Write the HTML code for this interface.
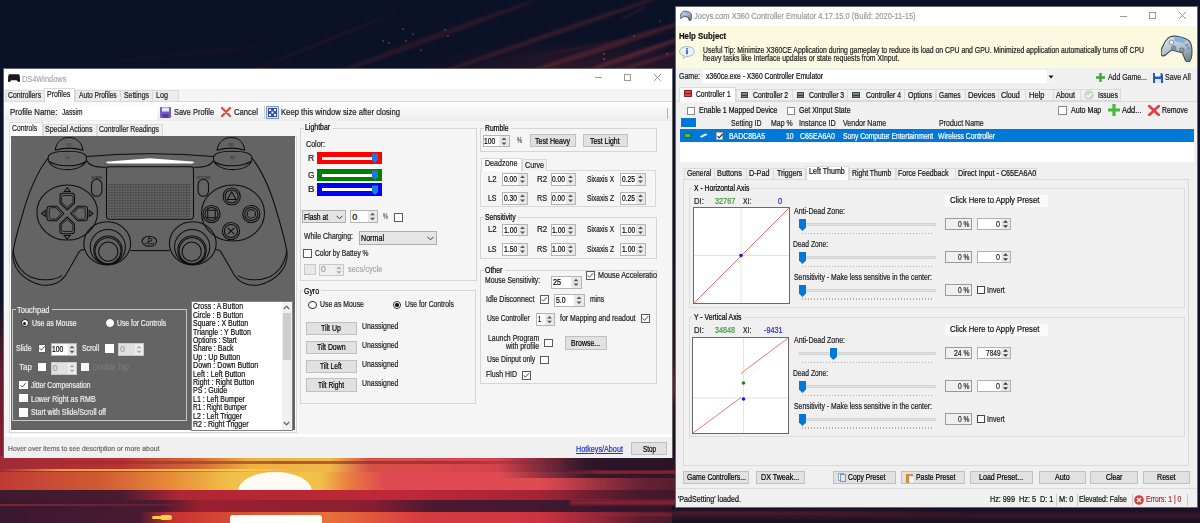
<!DOCTYPE html><html><head><meta charset="utf-8"><style>html,body{margin:0;padding:0;width:1200px;height:523px;overflow:hidden;position:relative;}body *{position:absolute;box-sizing:border-box;}span{white-space:nowrap;font-family:"Liberation Sans",sans-serif;-webkit-text-stroke:0.22px;}svg *{position:static}</style></head><body><div style="left:0;top:0;width:1200px;height:523px;background:#0b1127"></div>
<div style="left:0;top:0;width:680px;height:70px;overflow:hidden"><div style="left:380px;top:10px;width:320px;height:70px;background:radial-gradient(ellipse 60% 55% at 70% 95%,rgba(90,30,45,.55),rgba(60,20,40,0))"></div><div style="left:330px;top:72px;width:220px;height:6px;background:#4a1e2e;opacity:0.45;transform:rotate(-20deg);transform-origin:0 50%;filter:blur(1.2px);border-radius:50%"></div><div style="left:440px;top:70px;width:240px;height:5px;background:#5a2230;opacity:0.5;transform:rotate(-19deg);transform-origin:0 50%;filter:blur(1.2px);border-radius:50%"></div><div style="left:520px;top:72px;width:180px;height:6px;background:#6a2832;opacity:0.55;transform:rotate(-18deg);transform-origin:0 50%;filter:blur(1.2px);border-radius:50%"></div><div style="left:585px;top:69px;width:120px;height:5px;background:#7a2e36;opacity:0.55;transform:rotate(-19deg);transform-origin:0 50%;filter:blur(1.2px);border-radius:50%"></div><div style="left:600px;top:74px;width:100px;height:4px;background:#6a2832;opacity:0.5;transform:rotate(-17deg);transform-origin:0 50%;filter:blur(1.2px);border-radius:50%"></div><div style="left:250px;top:70px;width:160px;height:3px;background:#3a1a2a;opacity:0.45;transform:rotate(-22deg);transform-origin:0 50%;filter:blur(1.2px);border-radius:50%"></div><div style="left:515px;top:58px;width:170px;height:3px;background:#3e1a2a;opacity:0.5;transform:rotate(-10deg);transform-origin:0 50%;filter:blur(1.2px);border-radius:50%"></div><div style="left:620px;top:19px;width:30px;height:1.5px;background:#4a2030;opacity:0.6;transform:rotate(-28deg);transform-origin:0 50%;filter:blur(1.2px);border-radius:50%"></div><div style="left:100px;top:62px;width:180px;height:2px;background:#2e1628;opacity:0.5;transform:rotate(-6deg);transform-origin:0 50%;filter:blur(1.2px);border-radius:50%"></div><div style="left:402px;top:28px;width:2px;height:2px;background:#a04a3a;opacity:.65;border-radius:1px"></div><div style="left:412px;top:33px;width:2px;height:2px;background:#a04a3a;opacity:.65;border-radius:1px"></div><div style="left:405px;top:40px;width:2px;height:2px;background:#a04a3a;opacity:.65;border-radius:1px"></div><div style="left:444px;top:29px;width:2px;height:2px;background:#a04a3a;opacity:.65;border-radius:1px"></div><div style="left:447px;top:35px;width:2px;height:2px;background:#a04a3a;opacity:.65;border-radius:1px"></div><div style="left:420px;top:49px;width:2px;height:2px;background:#904a3a;opacity:.65;border-radius:1px"></div><div style="left:382px;top:40px;width:2px;height:2px;background:#904a3a;opacity:.65;border-radius:1px"></div><div style="left:388px;top:42px;width:2px;height:2px;background:#904a3a;opacity:.65;border-radius:1px"></div><div style="left:603px;top:53px;width:2px;height:2px;background:#c05050;opacity:.65;border-radius:1px"></div><div style="left:603px;top:58px;width:2px;height:2px;background:#c05050;opacity:.65;border-radius:1px"></div><div style="left:666px;top:53px;width:2px;height:2px;background:#b05a3a;opacity:.65;border-radius:1px"></div><div style="left:633px;top:35px;width:2px;height:2px;background:#904040;opacity:.65;border-radius:1px"></div><div style="left:659px;top:20px;width:2px;height:2px;background:#804040;opacity:.65;border-radius:1px"></div></div>
<div style="left:671px;top:200px;width:6px;height:260px;background:linear-gradient(180deg,#0c1125,#2a1226 60%,#6a2030 72%,#2a1226 80%,#141020)"></div>
<div style="left:0;top:300px;width:4px;height:160px;background:linear-gradient(180deg,#0c1125,#5a1a2c 40%,#8a2030)"></div>
<div style="left:0;top:456px;width:676px;height:16px;background:linear-gradient(90deg,#a02a36 0px,#b83234 120px,#d86a34 200px,#f0b040 250px,#f0b848 330px,#d85048 370px,#d8444e 480px,#b8384a 560px,#3e1a30 610px,#2e1628 676px);"></div>
<div style="left:0;top:461px;width:676px;height:3px;background:linear-gradient(90deg,rgba(80,20,40,.0) 0px,rgba(120,30,40,.6) 280px,rgba(120,30,40,.5) 460px,rgba(60,20,40,0) 560px);"></div>
<div style="left:0;top:472px;width:676px;height:18px;background:linear-gradient(90deg,#c03a34 0px,#d05a34 100px,#e88a38 170px,#f0c048 230px,#f0c048 320px,#e87a40 350px,#e04a52 385px,#e04a52 560px,#c83a48 620px,#8a2a3a 676px);"></div>
<div style="left:0;top:469px;width:676px;height:2px;background:linear-gradient(90deg,rgba(240,180,60,0) 0px,#e8a040 60px,#f8d050 240px,rgba(248,208,80,0) 300px);"></div>
<div style="left:237.5px;top:471.5px;width:74px;height:19px;border-radius:37px 37px 0 0/19px 19px 0 0;background:#fffaf4"></div>
<div style="left:0;top:490px;width:676px;height:10px;background:linear-gradient(90deg,#3e1a30 0px,#4a1a30 120px,#b02634 180px,#c02838 400px,#a02434 560px,#5a1c30 676px);"></div>
<div style="left:0;top:500px;width:676px;height:12px;background:linear-gradient(90deg,#3a1830 0px,#4a1a30 160px,#9a2030 200px,#8a1e30 370px,#4a1a30 430px,#3a1830 676px);"></div>
<div style="left:0;top:504px;width:676px;height:2px;background:linear-gradient(90deg,rgba(160,40,55,.7) 0px,rgba(160,40,55,.3) 170px,rgba(160,40,55,0) 176px);"></div>
<div style="left:0;top:512px;width:676px;height:11px;background:linear-gradient(90deg,#3a1830 0px,#4a1a30 140px,#c83030 170px,#d84a34 230px,#e87038 330px,#d83a40 420px,#c83040 600px,#6a2030 676px);"></div>
<div style="left:500px;top:456px;width:176px;height:22px;background:#2a1428;-webkit-mask-image:linear-gradient(90deg,transparent,rgba(0,0,0,.92) 90px)"></div>
<div style="left:540px;top:478px;width:136px;height:45px;background:#2a1428;-webkit-mask-image:linear-gradient(90deg,transparent,rgba(0,0,0,.55) 100px)"></div>
<div style="left:560px;top:470px;width:116px;height:4px;background:rgba(200,50,60,.55);filter:blur(1px);-webkit-mask-image:linear-gradient(90deg,transparent,#000 40px)"></div>
<div style="left:570px;top:500px;width:106px;height:5px;background:rgba(190,40,55,.6);filter:blur(1px)"></div>
<div style="left:600px;top:513px;width:76px;height:3px;background:rgba(170,40,55,.5);filter:blur(1px)"></div>
<div style="left:230px;top:515px;width:92px;height:8px;background:#fffdf8;border-radius:3px 3px 0 0"></div>
<div style="left:152px;top:516px;width:9px;height:3px;background:#f0d040;border-radius:2px"></div>
<div style="left:160px;top:515px;width:12px;height:5px;background:#f8d848;border-radius:3px"></div>
<div style="left:672px;top:506px;width:528px;height:17px;background:linear-gradient(180deg,#120f22 0,#1e1226 5px,#3a1628 9px,#241224 13px,#140f20 17px)"></div>
<div style="left:672px;top:511px;width:300px;height:4px;background:linear-gradient(90deg,#4a1a2a,rgba(90,30,45,.6) 50%,rgba(60,20,40,0));filter:blur(1px)"></div>
<div style="left:3px;top:68px;width:670px;height:390px;background:#f5f5f5;border:1px solid rgba(40,40,40,.7);border-bottom:none;"></div>
<div style="left:4px;top:69px;width:668px;height:20px;background:#fff"></div>
<svg style="left:8px;top:73px" width="12" height="10" viewBox="0 0 12 10"><path d="M2 1.2h8c1 0 1.5 .6 1.8 1.6l.2 5.2c0 1-.8 1.4-1.6.9L8.6 7.2H3.4L1.6 8.9C.8 9.4 0 9 0 8l.2-5.2C.5 1.8 1 1.2 2 1.2z" fill="#1a1a1a"/></svg>
<span style="left:22.41px;top:74.40px;font-size:9.52px;line-height:9.52px;color:#a8a8a8;transform:scaleX(0.776);transform-origin:0 0;">DS4Windows</span>
<div style="left:595px;top:77.3px;width:6.5px;height:1px;background:#999"></div>
<div style="left:624px;top:74.2px;width:7px;height:6.8px;border:1px solid #999"></div>
<svg style="left:653.6px;top:74.3px" width="7" height="7"><path d="M0 0L7 7M7 0L0 7" stroke="#8a8a8a" stroke-width="0.9"/></svg>
<div style="left:4px;top:101px;width:668px;height:1px;background:#d9d9d9"></div>
<div style="left:5px;top:89.5px;width:40px;height:12px;background:#ececec;border:1px solid #d9d9d9;"></div>
<div style="left:44px;top:88px;width:31px;height:14px;background:#fff;border:1px solid #d9d9d9;border-bottom:none;"></div>
<div style="left:75px;top:89.5px;width:46px;height:12px;background:#ececec;border:1px solid #d9d9d9;"></div>
<div style="left:120px;top:89.5px;width:33px;height:12px;background:#ececec;border:1px solid #d9d9d9;"></div>
<div style="left:152px;top:89.5px;width:27px;height:12px;background:#ececec;border:1px solid #d9d9d9;"></div>
<span style="left:7.66px;top:91.47px;font-size:8.96px;line-height:8.96px;color:#222;transform:scaleX(0.764);transform-origin:0 0;">Controllers</span>
<span style="left:47.44px;top:90.27px;font-size:8.96px;line-height:8.96px;color:#222;transform:scaleX(0.780);transform-origin:0 0;">Profiles</span>
<span style="left:78.50px;top:91.47px;font-size:8.96px;line-height:8.96px;color:#222;transform:scaleX(0.742);transform-origin:0 0;">Auto Profiles</span>
<span style="left:123.72px;top:91.47px;font-size:8.96px;line-height:8.96px;color:#222;transform:scaleX(0.772);transform-origin:0 0;">Settings</span>
<span style="left:156.42px;top:91.47px;font-size:8.96px;line-height:8.96px;color:#222;transform:scaleX(0.802);transform-origin:0 0;">Log</span>
<div style="left:5px;top:102px;width:667px;height:19px;background:linear-gradient(180deg,#fdfdfd,#f4f4f4 60%,#ececec)"></div>
<div style="left:667px;top:108px;width:1px;height:11px;background:#b0b0b0"></div>
<span style="left:9.58px;top:108.09px;font-size:9.30px;line-height:9.30px;color:#222;transform:scaleX(0.840);transform-origin:0 0;">Profile Name:</span>
<div style="left:59.5px;top:105.5px;width:97px;height:14.5px;background:#fff"></div>
<span style="left:62.43px;top:108.09px;font-size:9.30px;line-height:9.30px;color:#222;transform:scaleX(0.708);transform-origin:0 0;">Jassim</span>
<svg style="left:160px;top:106.5px" width="11" height="11" viewBox="0 0 11 11"><rect x="0" y="0" width="11" height="11" rx="1" fill="#7a5cc0"/><rect x="2" y="0.5" width="7" height="4" fill="#e8e4f4"/><rect x="2.5" y="7" width="6" height="4" fill="#5a3a9a"/></svg>
<span style="left:174.20px;top:108.09px;font-size:9.30px;line-height:9.30px;color:#222;transform:scaleX(0.799);transform-origin:0 0;">Save Profile</span>
<svg style="left:220.5px;top:106.5px" width="10" height="10" viewBox="0 0 10 10"><path d="M1 1L9 9M9 1L1 9" stroke="#e0503a" stroke-width="2.4" stroke-linecap="round"/></svg>
<span style="left:233.62px;top:108.09px;font-size:9.30px;line-height:9.30px;color:#222;transform:scaleX(0.825);transform-origin:0 0;">Cancel</span>
<div style="left:264px;top:106px;width:1px;height:13px;background:#d0d0d0"></div>
<svg style="left:266px;top:106px" width="13" height="13" viewBox="0 0 13 13"><rect x="0.5" y="0.5" width="12" height="12" fill="#dbe6f7" stroke="#7a9ac8"/><rect x="2" y="2" width="9" height="9" fill="#2f4fb0"/><rect x="3" y="3" width="2" height="2" fill="#fff"/><rect x="8" y="3" width="2" height="2" fill="#fff"/><rect x="3" y="8" width="2" height="2" fill="#fff"/><rect x="8" y="8" width="2" height="2" fill="#fff"/><rect x="5.5" y="5.5" width="2" height="2" fill="#fff"/></svg>
<span style="left:281.39px;top:108.09px;font-size:9.30px;line-height:9.30px;color:#222;transform:scaleX(0.826);transform-origin:0 0;">Keep this window size after closing</span>
<div style="left:5px;top:121px;width:667px;height:320px;background:#f5f5f5"></div>
<div style="left:8.5px;top:121.5px;width:34px;height:14.5px;background:#fff;border:1px solid #d9d9d9;border-bottom:none;"></div>
<div style="left:42.5px;top:123.5px;width:54px;height:12px;background:#f0f0f0;border:1px solid #d9d9d9;border-bottom:none;"></div>
<div style="left:96.5px;top:123.5px;width:66px;height:12px;background:#f0f0f0;border:1px solid #d9d9d9;border-bottom:none;"></div>
<span style="left:12.46px;top:123.67px;font-size:8.96px;line-height:8.96px;color:#222;transform:scaleX(0.757);transform-origin:0 0;">Controls</span>
<span style="left:45.22px;top:124.87px;font-size:8.96px;line-height:8.96px;color:#222;transform:scaleX(0.782);transform-origin:0 0;">Special Actions</span>
<span style="left:99.16px;top:124.87px;font-size:8.96px;line-height:8.96px;color:#222;transform:scaleX(0.758);transform-origin:0 0;">Controller Readings</span>
<div style="left:8.5px;top:135.5px;width:288px;height:297px;background:#fff;border:1px solid #d9d9d9;"></div>
<div style="left:10.5px;top:136px;width:284px;height:294px;background:#646464"></div>
<svg style="left:10.5px;top:136px" width="284" height="294" viewBox="10.5 136 284 294"><g>
<path d="M54.6 150.3 C56 142 61.5 137.5 68.5 137.5 C75.5 137.5 81 142 82.6 150.3" fill="none" stroke="#0d0d0d" stroke-width="1.05"/>
<path d="M54.6 150.3 Q68.5 146 82.6 150.3" fill="none" stroke="#0d0d0d" stroke-width="1.05"/>
<path d="M47.6 157.5 C48.5 152.8 57 151.3 67 151.3 C77 151.3 85.5 152.8 86 157.5 C86.6 164.5 78 169.6 67 169.6 C56 169.6 47 165 47.6 157.5 Z" fill="none" stroke="#0d0d0d" stroke-width="1.05"/>
<path d="M49 161.5 C55 165.5 62 165.8 67 165.8 C72 165.8 80 165.5 85.5 161.5" fill="none" stroke="#0d0d0d" stroke-width="1.05"/>
<path d="M47.6 158 C38 170 28 192 21 218 C15 238 11.5 252 12.6 258 C14 270 24 281 40 284.8 C52 287 62 282 67 272 L78.8 251.5 C80 250 82 249.5 84 249.5" fill="none" stroke="#0d0d0d" stroke-width="1.05"/>
<path d="M12.6 250 C14 262 20 272 30 277 C40 281 53 281 61.6 275.6" fill="none" stroke="#0d0d0d" stroke-width="1.05"/>
<path d="M86 156.6 Q118 153.6 149.5 153.8" fill="none" stroke="#0d0d0d" stroke-width="1.05"/>
<path d="M86 160.5 C88.5 165.5 94 167.3 106 167.3" fill="none" stroke="#0d0d0d" stroke-width="1.05"/>
<rect x="91" y="179.3" width="10.4" height="17" rx="5.2" fill="none" stroke="#0d0d0d" stroke-width="1.05"/>
<ellipse cx="106.7" cy="243.3" rx="23.4" ry="21.6" fill="none" stroke="#0d0d0d" stroke-width="1.05"/>
<circle cx="107.3" cy="247" r="17.6" fill="none" stroke="#0d0d0d" stroke-width="1.05"/>
<circle cx="107.5" cy="250.2" r="14.2" fill="none" stroke="#0d0d0d" stroke-width="1.05"/>
<circle cx="107.5" cy="250.8" r="13" fill="none" stroke="#0d0d0d" stroke-width="1.05"/>
<circle cx="107.8" cy="251.6" r="9.6" fill="none" stroke="#0d0d0d" stroke-width="1.05"/>
<path d="M130 250.6 L149.5 250.6" fill="none" stroke="#0d0d0d" stroke-width="1.05"/>
</g><g transform="translate(299,0) scale(-1,1)">
<path d="M54.6 150.3 C56 142 61.5 137.5 68.5 137.5 C75.5 137.5 81 142 82.6 150.3" fill="none" stroke="#0d0d0d" stroke-width="1.05"/>
<path d="M54.6 150.3 Q68.5 146 82.6 150.3" fill="none" stroke="#0d0d0d" stroke-width="1.05"/>
<path d="M47.6 157.5 C48.5 152.8 57 151.3 67 151.3 C77 151.3 85.5 152.8 86 157.5 C86.6 164.5 78 169.6 67 169.6 C56 169.6 47 165 47.6 157.5 Z" fill="none" stroke="#0d0d0d" stroke-width="1.05"/>
<path d="M49 161.5 C55 165.5 62 165.8 67 165.8 C72 165.8 80 165.5 85.5 161.5" fill="none" stroke="#0d0d0d" stroke-width="1.05"/>
<path d="M47.6 158 C38 170 28 192 21 218 C15 238 11.5 252 12.6 258 C14 270 24 281 40 284.8 C52 287 62 282 67 272 L78.8 251.5 C80 250 82 249.5 84 249.5" fill="none" stroke="#0d0d0d" stroke-width="1.05"/>
<path d="M12.6 250 C14 262 20 272 30 277 C40 281 53 281 61.6 275.6" fill="none" stroke="#0d0d0d" stroke-width="1.05"/>
<path d="M86 156.6 Q118 153.6 149.5 153.8" fill="none" stroke="#0d0d0d" stroke-width="1.05"/>
<path d="M86 160.5 C88.5 165.5 94 167.3 106 167.3" fill="none" stroke="#0d0d0d" stroke-width="1.05"/>
<rect x="91" y="179.3" width="10.4" height="17" rx="5.2" fill="none" stroke="#0d0d0d" stroke-width="1.05"/>
<ellipse cx="106.7" cy="243.3" rx="23.4" ry="21.6" fill="none" stroke="#0d0d0d" stroke-width="1.05"/>
<circle cx="107.3" cy="247" r="17.6" fill="none" stroke="#0d0d0d" stroke-width="1.05"/>
<circle cx="107.5" cy="250.2" r="14.2" fill="none" stroke="#0d0d0d" stroke-width="1.05"/>
<circle cx="107.5" cy="250.8" r="13" fill="none" stroke="#0d0d0d" stroke-width="1.05"/>
<circle cx="107.8" cy="251.6" r="9.6" fill="none" stroke="#0d0d0d" stroke-width="1.05"/>
<path d="M130 250.6 L149.5 250.6" fill="none" stroke="#0d0d0d" stroke-width="1.05"/>
</g><path d="M105.5 162.3 Q106 161.6 108 161.4 L149.5 158.2 L191 161.4 Q193.5 161.6 193.8 162.3 Q193.5 163.3 191 163.4 L108 163.4 Q106 163.3 105.5 162.3Z" fill="#fff"/><path d="M106 170 Q106 166.7 109 166.7 L190 166.7 Q193 166.7 193 170 L193 216 Q193 219.2 189.8 219.2 L109.2 219.2 Q106 219.2 106 216 Z" fill="none" stroke="#0d0d0d" stroke-width="1.05"/><defs><pattern id="dp" width="1.6" height="1.6" patternUnits="userSpaceOnUse"><rect width="0.8" height="0.8" fill="#1a1a1a"/></pattern></defs><rect x="108" y="183.7" width="82.6" height="33.6" fill="url(#dp)" opacity="0.65"/><ellipse cx="66.7" cy="212.5" rx="30.3" ry="27.6" fill="none" stroke="#0d0d0d" stroke-width="1.05"/><ellipse cx="232.5" cy="213" rx="31.5" ry="28" fill="none" stroke="#0d0d0d" stroke-width="1.05"/><g transform="rotate(0 66.7 213.5)"><path d="M59.5 196 Q59.5 193.5 62 193.2 L71.5 193.2 Q74 193.5 74 196 L74 203 L66.7 210 L59.5 203 Z" fill="none" stroke="#0d0d0d" stroke-width="1.05"/><path d="M61 197.5 Q61 195.6 63 195.5 L70.5 195.5 Q72.5 195.6 72.5 197.5 L72.5 202.3 L66.7 207.5 L61 202.3 Z" fill="none" stroke="#0d0d0d" stroke-width="0.8"/><path d="M63.8 191.5 L66.7 187.8 L69.6 191.5 Z" fill="none" stroke="#0d0d0d" stroke-width="1.05"/></g><g transform="rotate(90 66.7 213.5)"><path d="M59.5 196 Q59.5 193.5 62 193.2 L71.5 193.2 Q74 193.5 74 196 L74 203 L66.7 210 L59.5 203 Z" fill="none" stroke="#0d0d0d" stroke-width="1.05"/><path d="M61 197.5 Q61 195.6 63 195.5 L70.5 195.5 Q72.5 195.6 72.5 197.5 L72.5 202.3 L66.7 207.5 L61 202.3 Z" fill="none" stroke="#0d0d0d" stroke-width="0.8"/><path d="M63.8 191.5 L66.7 187.8 L69.6 191.5 Z" fill="none" stroke="#0d0d0d" stroke-width="1.05"/></g><g transform="rotate(180 66.7 213.5)"><path d="M59.5 196 Q59.5 193.5 62 193.2 L71.5 193.2 Q74 193.5 74 196 L74 203 L66.7 210 L59.5 203 Z" fill="none" stroke="#0d0d0d" stroke-width="1.05"/><path d="M61 197.5 Q61 195.6 63 195.5 L70.5 195.5 Q72.5 195.6 72.5 197.5 L72.5 202.3 L66.7 207.5 L61 202.3 Z" fill="none" stroke="#0d0d0d" stroke-width="0.8"/><path d="M63.8 191.5 L66.7 187.8 L69.6 191.5 Z" fill="none" stroke="#0d0d0d" stroke-width="1.05"/></g><g transform="rotate(270 66.7 213.5)"><path d="M59.5 196 Q59.5 193.5 62 193.2 L71.5 193.2 Q74 193.5 74 196 L74 203 L66.7 210 L59.5 203 Z" fill="none" stroke="#0d0d0d" stroke-width="1.05"/><path d="M61 197.5 Q61 195.6 63 195.5 L70.5 195.5 Q72.5 195.6 72.5 197.5 L72.5 202.3 L66.7 207.5 L61 202.3 Z" fill="none" stroke="#0d0d0d" stroke-width="0.8"/><path d="M63.8 191.5 L66.7 187.8 L69.6 191.5 Z" fill="none" stroke="#0d0d0d" stroke-width="1.05"/></g><circle cx="231.2" cy="196.5" r="8.6" fill="none" stroke="#0d0d0d" stroke-width="1.05"/><circle cx="231.2" cy="196.5" r="6.6" fill="none" stroke="#0d0d0d" stroke-width="1.05"/><circle cx="211" cy="214" r="8.6" fill="none" stroke="#0d0d0d" stroke-width="1.05"/><circle cx="211" cy="214" r="6.6" fill="none" stroke="#0d0d0d" stroke-width="1.05"/><circle cx="250.8" cy="214" r="8.6" fill="none" stroke="#0d0d0d" stroke-width="1.05"/><circle cx="250.8" cy="214" r="6.6" fill="none" stroke="#0d0d0d" stroke-width="1.05"/><circle cx="230.5" cy="231" r="8.6" fill="none" stroke="#0d0d0d" stroke-width="1.05"/><circle cx="230.5" cy="231" r="6.6" fill="none" stroke="#0d0d0d" stroke-width="1.05"/><path d="M231.2 191.8 L235.6 199.5 L226.8 199.5 Z" fill="none" stroke="#0d0d0d" stroke-width="1.05"/><rect x="207.2" y="210.2" width="7.6" height="7.6" fill="none" stroke="#0d0d0d" stroke-width="1.05"/><circle cx="250.8" cy="214" r="4.2" fill="none" stroke="#0d0d0d" stroke-width="1.05"/><path d="M227.3 227.8 L233.7 234.2 M233.7 227.8 L227.3 234.2" fill="none" stroke="#0d0d0d" stroke-width="1.05"/><ellipse cx="148.8" cy="241.3" rx="7.3" ry="5" fill="none" stroke="#0d0d0d" stroke-width="1.05"/><path d="M148.2 237.6 L148.2 244.6 M148.2 238 Q151.4 237.8 151.4 239.8 Q151.4 241.6 148.4 241.4 M144.2 243.6 Q146.4 242.4 147.6 243.2 M149.2 243.8 Q151.6 243.9 153.4 243" fill="none" stroke="#0d0d0d" stroke-width="0.9"/><text x="68.5" y="145.5" font-size="3.6" text-anchor="middle" fill="#1a1a1a" font-family="Liberation Sans">L2</text><text x="67" y="158.8" font-size="3.6" text-anchor="middle" fill="#1a1a1a" font-family="Liberation Sans">L1</text><text x="230.5" y="145.5" font-size="3.6" text-anchor="middle" fill="#1a1a1a" font-family="Liberation Sans">R2</text><text x="232" y="158.8" font-size="3.6" text-anchor="middle" fill="#1a1a1a" font-family="Liberation Sans">R1</text><text x="96.2" y="178.5" font-size="3.2" text-anchor="middle" fill="#1a1a1a" font-family="Liberation Sans">SHARE</text><text x="202.8" y="178.5" font-size="3.2" text-anchor="middle" fill="#1a1a1a" font-family="Liberation Sans">OPTIONS</text></svg>
<div style="left:12px;top:309px;width:175px;height:112px;border:1px solid #c8c8c8;"></div>
<div style="left:15.5px;top:305px;width:36px;height:8px;background:#646464;"></div>
<span style="left:17.35px;top:305.87px;font-size:8.96px;line-height:8.96px;color:#ececec;transform:scaleX(0.838);transform-origin:0 0;">Touchpad</span>
<div style="left:20.8px;top:319px;width:8px;height:8px;background:#fff;border:1px solid #222;border-radius:50%;"></div>
<div style="left:23.3px;top:321.5px;width:3px;height:3px;background:#111;border-radius:50%;"></div>
<span style="left:32.21px;top:319.37px;font-size:8.96px;line-height:8.96px;color:#ececec;transform:scaleX(0.781);transform-origin:0 0;">Use as Mouse</span>
<div style="left:105.7px;top:319px;width:8px;height:8px;background:#fff;border:1px solid #fff;border-radius:50%;"></div>
<span style="left:116.82px;top:319.37px;font-size:8.96px;line-height:8.96px;color:#ececec;transform:scaleX(0.760);transform-origin:0 0;">Use for Controls</span>
<span style="left:16.42px;top:344.37px;font-size:8.96px;line-height:8.96px;color:#ececec;transform:scaleX(0.779);transform-origin:0 0;">Slide</span>
<div style="left:37.7px;top:344px;width:8.5px;height:8.5px;background:#fff;border:1px solid #5a5a5a;"></div>
<svg style="left:37.7px;top:344px" width="8.5" height="8.5" viewBox="0 0 9 9"><path d="M1.8 4.6L3.6 6.5L7.3 2.3" fill="none" stroke="#3a3a3a" stroke-width="0.95"/></svg>
<div style="left:50.8px;top:342.7px;width:26px;height:13px;background:#fff;border:1px solid #b4b4b4;"></div>
<div style="left:67.8px;top:343.7px;width:8px;height:11px;background:#e8e8e8;"></div>
<svg style="left:67.8px;top:343.7px" width="8" height="11"><path d="M1.5 4.3L4.0 1.7999999999999998L6.5 4.3Z M1.5 6.7L4.0 9.2L6.5 6.7Z" fill="#555"/></svg>
<span style="left:52.33px;top:344.95px;font-size:8.96px;line-height:8.96px;color:#000;transform:scaleX(0.751);transform-origin:0 0;">100</span>
<span style="left:82.42px;top:344.37px;font-size:8.96px;line-height:8.96px;color:#ececec;transform:scaleX(0.767);transform-origin:0 0;">Scroll</span>
<div style="left:105px;top:344px;width:8.5px;height:8.5px;background:#fff;border:1px solid #fff;"></div>
<div style="left:118.2px;top:342.7px;width:25.5px;height:13px;background:#e0e0e0;border:1px solid #c8c8c8;"></div>
<div style="left:134.7px;top:343.7px;width:8px;height:11px;background:#ececec;"></div>
<svg style="left:134.7px;top:343.7px" width="8" height="11"><path d="M1.5 4.3L4.0 1.7999999999999998L6.5 4.3Z M1.5 6.7L4.0 9.2L6.5 6.7Z" fill="#aaa"/></svg>
<span style="left:119.93px;top:344.95px;font-size:8.96px;line-height:8.96px;color:#a0a0a0;">0</span>
<span style="left:19.24px;top:362.87px;font-size:8.96px;line-height:8.96px;color:#ececec;transform:scaleX(0.887);transform-origin:0 0;">Tap</span>
<div style="left:37.7px;top:362.7px;width:8.5px;height:8.5px;background:#fff;border:1px solid #fff;"></div>
<div style="left:50.8px;top:361.6px;width:26px;height:13px;background:#e0e0e0;border:1px solid #c8c8c8;"></div>
<div style="left:67.8px;top:362.6px;width:8px;height:11px;background:#ececec;"></div>
<svg style="left:67.8px;top:362.6px" width="8" height="11"><path d="M1.5 4.3L4.0 1.7999999999999998L6.5 4.3Z M1.5 6.7L4.0 9.2L6.5 6.7Z" fill="#aaa"/></svg>
<span style="left:52.53px;top:363.85px;font-size:8.96px;line-height:8.96px;color:#a0a0a0;">0</span>
<div style="left:80.7px;top:362.7px;width:8.5px;height:8.5px;background:#f4f4f4;border:1px solid #f4f4f4;"></div>
<span style="left:92.63px;top:362.87px;font-size:8.96px;line-height:8.96px;color:#7a7a7a;transform:scaleX(0.794);transform-origin:0 0;">Double Tap</span>
<div style="left:19.4px;top:381px;width:8.3px;height:8.3px;background:#fff;border:1px solid #fff;"></div>
<svg style="left:19.4px;top:381px" width="8.3" height="8.3" viewBox="0 0 9 9"><path d="M1.8 4.6L3.6 6.5L7.3 2.3" fill="none" stroke="#3a3a3a" stroke-width="0.95"/></svg>
<span style="left:31.33px;top:381.27px;font-size:8.96px;line-height:8.96px;color:#ececec;transform:scaleX(0.746);transform-origin:0 0;">Jitter Compensation</span>
<div style="left:19.4px;top:394px;width:8.3px;height:8.3px;background:#fff;border:1px solid #fff;"></div>
<span style="left:30.84px;top:394.87px;font-size:8.96px;line-height:8.96px;color:#ececec;transform:scaleX(0.788);transform-origin:0 0;">Lower Right as RMB</span>
<div style="left:19.4px;top:408.4px;width:8.3px;height:8.3px;background:#fff;border:1px solid #fff;"></div>
<span style="left:31.12px;top:408.47px;font-size:8.96px;line-height:8.96px;color:#ececec;transform:scaleX(0.774);transform-origin:0 0;">Start with Slide/Scroll off</span>
<div style="left:191px;top:301px;width:101.5px;height:130px;background:#fff;border:1px solid #828282;"></div>
<div style="left:281.5px;top:302px;width:10px;height:128px;background:#f0f0f0"></div>
<div style="left:282.5px;top:313px;width:8px;height:47px;background:#cdcdcd"></div>
<svg style="left:283px;top:305px" width="7" height="5"><path d="M0.8 4L3.5 1.2L6.2 4" fill="none" stroke="#555" stroke-width="1.1"/></svg>
<svg style="left:283px;top:421px" width="7" height="5"><path d="M0.8 1L3.5 3.8L6.2 1" fill="none" stroke="#555" stroke-width="1.1"/></svg>
<span style="left:192.95px;top:302.27px;font-size:8.96px;line-height:8.96px;color:#111;transform:scaleX(0.779);transform-origin:0 0;">Cross : A Button</span>
<span style="left:192.95px;top:310.69px;font-size:8.96px;line-height:8.96px;color:#111;transform:scaleX(0.773);transform-origin:0 0;">Circle : B Button</span>
<span style="left:193.02px;top:319.11px;font-size:8.96px;line-height:8.96px;color:#111;transform:scaleX(0.781);transform-origin:0 0;">Square : X Button</span>
<span style="left:193.16px;top:327.53px;font-size:8.96px;line-height:8.96px;color:#111;transform:scaleX(0.788);transform-origin:0 0;">Triangle : Y Button</span>
<span style="left:193.03px;top:335.95px;font-size:8.96px;line-height:8.96px;color:#111;transform:scaleX(0.765);transform-origin:0 0;">Options : Start</span>
<span style="left:193.02px;top:344.37px;font-size:8.96px;line-height:8.96px;color:#111;transform:scaleX(0.789);transform-origin:0 0;">Share : Back</span>
<span style="left:192.80px;top:352.79px;font-size:8.96px;line-height:8.96px;color:#111;transform:scaleX(0.804);transform-origin:0 0;">Up : Up Button</span>
<span style="left:192.73px;top:361.21px;font-size:8.96px;line-height:8.96px;color:#111;transform:scaleX(0.799);transform-origin:0 0;">Down : Down Button</span>
<span style="left:192.73px;top:369.63px;font-size:8.96px;line-height:8.96px;color:#111;transform:scaleX(0.795);transform-origin:0 0;">Left : Left Button</span>
<span style="left:192.73px;top:378.05px;font-size:8.96px;line-height:8.96px;color:#111;transform:scaleX(0.790);transform-origin:0 0;">Right : Right Button</span>
<span style="left:192.74px;top:386.47px;font-size:8.96px;line-height:8.96px;color:#111;transform:scaleX(0.787);transform-origin:0 0;">PS : Guide</span>
<span style="left:192.74px;top:394.89px;font-size:8.96px;line-height:8.96px;color:#111;transform:scaleX(0.784);transform-origin:0 0;">L1 : Left Bumper</span>
<span style="left:192.78px;top:403.31px;font-size:8.96px;line-height:8.96px;color:#111;transform:scaleX(0.730);transform-origin:0 0;">R1 : Right Bumper</span>
<span style="left:192.74px;top:411.73px;font-size:8.96px;line-height:8.96px;color:#111;transform:scaleX(0.783);transform-origin:0 0;">L2 : Left Trigger</span>
<span style="left:192.73px;top:420.15px;font-size:8.96px;line-height:8.96px;color:#111;transform:scaleX(0.792);transform-origin:0 0;">R2 : Right Trigger</span>
<div style="left:299.5px;top:127.5px;width:177px;height:153px;border:1px solid #d5d5d5;"></div>
<div style="left:303.5px;top:123.5px;width:28.5px;height:8px;background:#f5f5f5;"></div>
<span style="left:304.94px;top:122.87px;font-size:8.96px;line-height:8.96px;color:#000;transform:scaleX(0.777);transform-origin:0 0;">Lightbar</span>
<span style="left:305.64px;top:140.37px;font-size:8.96px;line-height:8.96px;color:#222;transform:scaleX(0.794);transform-origin:0 0;">Color:</span>
<span style="left:307.81px;top:153.87px;font-size:8.96px;line-height:8.96px;color:#222;transform:scaleX(0.967);transform-origin:0 0;">R</span>
<div style="left:317.2px;top:151.7px;width:64.7px;height:12.8px;background:#ff0000"></div>
<div style="left:321.5px;top:156.7px;width:51px;height:3px;background:#fff"></div>
<svg style="left:371.5px;top:153.2px" width="6" height="10" viewBox="0 0 6 10"><path d="M0 0.5h6v6.5L3 10L0 7z" fill="#1e7ad8"/></svg>
<span style="left:308.08px;top:170.77px;font-size:8.96px;line-height:8.96px;color:#222;transform:scaleX(0.930);transform-origin:0 0;">G</span>
<div style="left:317.2px;top:168.6px;width:64.7px;height:12.8px;background:#008000"></div>
<div style="left:321.5px;top:173.6px;width:51px;height:3px;background:#fff"></div>
<svg style="left:371.5px;top:170.1px" width="6" height="10" viewBox="0 0 6 10"><path d="M0 0.5h6v6.5L3 10L0 7z" fill="#1e7ad8"/></svg>
<span style="left:307.73px;top:185.37px;font-size:8.96px;line-height:8.96px;color:#222;transform:scaleX(1.075);transform-origin:0 0;">B</span>
<div style="left:317.2px;top:183.2px;width:64.7px;height:12.8px;background:#0000ff"></div>
<div style="left:321.5px;top:188.2px;width:51px;height:3px;background:#fff"></div>
<svg style="left:371.5px;top:184.7px" width="6" height="10" viewBox="0 0 6 10"><path d="M0 0.5h6v6.5L3 10L0 7z" fill="#1e7ad8"/></svg>
<div style="left:302.3px;top:210.4px;width:43.6px;height:13.1px;background:#e5e5e5;border:1px solid #acacac;"></div>
<span style="left:304.46px;top:212.70px;font-size:8.96px;line-height:8.96px;color:#000;transform:scaleX(0.757);transform-origin:0 0;">Flash at</span>
<svg style="left:335.90000000000003px;top:214.95000000000002px" width="7" height="5"><path d="M0.5 0.8L3.5 3.8L6.5 0.8" fill="none" stroke="#333" stroke-width="1"/></svg>
<div style="left:350.4px;top:210.4px;width:27.2px;height:13.1px;background:#fff;border:1px solid #b4b4b4;"></div>
<div style="left:367.59999999999997px;top:211.4px;width:9px;height:11.1px;background:#e8e8e8;"></div>
<svg style="left:367.59999999999997px;top:211.4px" width="9" height="11.1"><path d="M2.0 4.35L4.5 1.8499999999999996L7.0 4.35Z M2.0 6.75L4.5 9.25L7.0 6.75Z" fill="#555"/></svg>
<span style="left:352.13px;top:212.70px;font-size:8.96px;line-height:8.96px;color:#000;">0</span>
<span style="left:382.83px;top:212.37px;font-size:8.96px;line-height:8.96px;color:#555;transform:scaleX(0.619);transform-origin:0 0;">%</span>
<div style="left:394px;top:212.6px;width:9px;height:9px;background:#fff;border:1px solid #5a5a5a;"></div>
<span style="left:304.40px;top:232.37px;font-size:8.96px;line-height:8.96px;color:#222;transform:scaleX(0.768);transform-origin:0 0;">While Charging:</span>
<div style="left:358.6px;top:231.3px;width:78.4px;height:13.7px;background:#e5e5e5;border:1px solid #acacac;"></div>
<span style="left:360.93px;top:233.90px;font-size:8.96px;line-height:8.96px;color:#000;transform:scaleX(0.797);transform-origin:0 0;">Normal</span>
<svg style="left:427.0px;top:236.15px" width="7" height="5"><path d="M0.5 0.8L3.5 3.8L6.5 0.8" fill="none" stroke="#333" stroke-width="1"/></svg>
<div style="left:303px;top:248.6px;width:9px;height:9px;background:#fff;border:1px solid #5a5a5a;"></div>
<span style="left:315.17px;top:248.77px;font-size:8.96px;line-height:8.96px;color:#222;transform:scaleX(0.747);transform-origin:0 0;">Color by Battey %</span>
<div style="left:304px;top:263.5px;width:11.5px;height:11.5px;background:#e8e8e8;border:1px solid #c8c8c8;"></div>
<div style="left:319px;top:263.5px;width:25px;height:12.3px;background:#f0f0f0;border:1px solid #c8c8c8;"></div>
<div style="left:335px;top:264.5px;width:8px;height:10.3px;background:#ececec;"></div>
<svg style="left:335px;top:264.5px" width="8" height="10.3"><path d="M1.5 3.95L4.0 1.4500000000000002L6.5 3.95Z M1.5 6.3500000000000005L4.0 8.850000000000001L6.5 6.3500000000000005Z" fill="#aaa"/></svg>
<span style="left:320.73px;top:265.40px;font-size:8.96px;line-height:8.96px;color:#a0a0a0;">0</span>
<span style="left:347.55px;top:265.07px;font-size:8.96px;line-height:8.96px;color:#a8a8a8;transform:scaleX(0.832);transform-origin:0 0;">secs/cycle</span>
<div style="left:299.5px;top:290.3px;width:176px;height:113.3px;border:1px solid #d5d5d5;"></div>
<div style="left:302.6px;top:286.3px;width:18.4px;height:8px;background:#f5f5f5;"></div>
<span style="left:304.25px;top:286.87px;font-size:8.96px;line-height:8.96px;color:#000;transform:scaleX(0.773);transform-origin:0 0;">Gyro</span>
<div style="left:308px;top:300.7px;width:8.5px;height:8.5px;background:#fff;border:1px solid #333;border-radius:50%;"></div>
<span style="left:320.22px;top:300.37px;font-size:8.96px;line-height:8.96px;color:#222;transform:scaleX(0.767);transform-origin:0 0;">Use as Mouse</span>
<div style="left:392.6px;top:300.7px;width:8.5px;height:8.5px;background:#fff;border:1px solid #333;border-radius:50%;"></div>
<div style="left:395.1px;top:303.2px;width:3.5px;height:3.5px;background:#111;border-radius:50%;"></div>
<span style="left:405.23px;top:300.37px;font-size:8.96px;line-height:8.96px;color:#222;transform:scaleX(0.756);transform-origin:0 0;">Use for Controls</span>
<div style="left:306px;top:321.8px;width:50.5px;height:13.3px;background:#e1e1e1;border:1px solid #c0c0c0;"></div>
<span style="left:321.36px;top:324.20px;font-size:8.96px;line-height:8.96px;color:#000;transform:scaleX(0.777);transform-origin:0 0;">Tilt Up</span>
<span style="left:362.22px;top:322.27px;font-size:8.96px;line-height:8.96px;color:#222;transform:scaleX(0.771);transform-origin:0 0;">Unassigned</span>
<div style="left:306px;top:340.8px;width:50.5px;height:13.3px;background:#e1e1e1;border:1px solid #c0c0c0;"></div>
<span style="left:317.11px;top:343.20px;font-size:8.96px;line-height:8.96px;color:#000;transform:scaleX(0.772);transform-origin:0 0;">Tilt Down</span>
<span style="left:362.22px;top:341.27px;font-size:8.96px;line-height:8.96px;color:#222;transform:scaleX(0.771);transform-origin:0 0;">Unassigned</span>
<div style="left:306px;top:359.7px;width:50.5px;height:13.3px;background:#e1e1e1;border:1px solid #c0c0c0;"></div>
<span style="left:320.37px;top:362.10px;font-size:8.96px;line-height:8.96px;color:#000;transform:scaleX(0.745);transform-origin:0 0;">Tilt Left</span>
<span style="left:362.22px;top:360.17px;font-size:8.96px;line-height:8.96px;color:#222;transform:scaleX(0.771);transform-origin:0 0;">Unassigned</span>
<div style="left:306px;top:378.3px;width:50.5px;height:13.3px;background:#e1e1e1;border:1px solid #c0c0c0;"></div>
<span style="left:318.12px;top:380.70px;font-size:8.96px;line-height:8.96px;color:#000;transform:scaleX(0.746);transform-origin:0 0;">Tilt Right</span>
<span style="left:362.22px;top:378.77px;font-size:8.96px;line-height:8.96px;color:#222;transform:scaleX(0.771);transform-origin:0 0;">Unassigned</span>
<div style="left:480.2px;top:127.7px;width:176.4px;height:24.1px;border:1px solid #d5d5d5;"></div>
<div style="left:483.7px;top:123.7px;width:26.9px;height:8px;background:#f5f5f5;"></div>
<span style="left:485.15px;top:123.87px;font-size:8.96px;line-height:8.96px;color:#000;transform:scaleX(0.768);transform-origin:0 0;">Rumble</span>
<div style="left:482.7px;top:135.1px;width:27.6px;height:12.4px;background:#fff;border:1px solid #b4b4b4;"></div>
<div style="left:499.3px;top:136.1px;width:10px;height:10.4px;background:#e8e8e8;"></div>
<svg style="left:499.3px;top:136.1px" width="10" height="10.4"><path d="M2.5 4.0L5.0 1.5L7.5 4.0Z M2.5 6.4L5.0 8.9L7.5 6.4Z" fill="#555"/></svg>
<span style="left:484.23px;top:137.05px;font-size:8.96px;line-height:8.96px;color:#000;transform:scaleX(0.751);transform-origin:0 0;">100</span>
<span style="left:516.83px;top:136.07px;font-size:8.96px;line-height:8.96px;color:#555;transform:scaleX(0.645);transform-origin:0 0;">%</span>
<div style="left:530.4px;top:134.3px;width:45.3px;height:13.2px;background:#e1e1e1;border:1px solid #c0c0c0;"></div>
<span style="left:535.41px;top:136.65px;font-size:8.96px;line-height:8.96px;color:#000;transform:scaleX(0.792);transform-origin:0 0;">Test Heavy</span>
<div style="left:582.6px;top:134.3px;width:45.2px;height:13.2px;background:#e1e1e1;border:1px solid #c0c0c0;"></div>
<span style="left:590.31px;top:136.65px;font-size:8.96px;line-height:8.96px;color:#000;transform:scaleX(0.773);transform-origin:0 0;">Test Light</span>
<div style="left:480.2px;top:170.4px;width:175.5px;height:36.5px;border:1px solid #d9d9d9;"></div>
<div style="left:481px;top:157.5px;width:40.5px;height:13.5px;background:#fff;border:1px solid #d9d9d9;border-bottom:none;"></div>
<div style="left:521.5px;top:159.2px;width:25px;height:11.6px;background:#f0f0f0;border:1px solid #d9d9d9;border-bottom:none;"></div>
<span style="left:484.93px;top:159.37px;font-size:8.96px;line-height:8.96px;color:#222;transform:scaleX(0.792);transform-origin:0 0;">Deadzone</span>
<span style="left:524.64px;top:161.37px;font-size:8.96px;line-height:8.96px;color:#222;transform:scaleX(0.800);transform-origin:0 0;">Curve</span>
<span style="left:488.18px;top:175.17px;font-size:8.96px;line-height:8.96px;color:#222;transform:scaleX(0.868);transform-origin:0 0;">L2</span>
<div style="left:502.2px;top:173.4px;width:25.5px;height:12.5px;background:#fff;border:1px solid #b4b4b4;"></div>
<div style="left:517.7px;top:174.4px;width:9px;height:10.5px;background:#e8e8e8;"></div>
<svg style="left:517.7px;top:174.4px" width="9" height="10.5"><path d="M2.0 4.05L4.5 1.5499999999999998L7.0 4.05Z M2.0 6.45L4.5 8.95L7.0 6.45Z" fill="#555"/></svg>
<span style="left:504.00px;top:175.40px;font-size:8.96px;line-height:8.96px;color:#000;transform:scaleX(0.742);transform-origin:0 0;">0.00</span>
<span style="left:537.16px;top:175.17px;font-size:8.96px;line-height:8.96px;color:#222;transform:scaleX(0.893);transform-origin:0 0;">R2</span>
<div style="left:550.5px;top:173.4px;width:25.6px;height:12.5px;background:#fff;border:1px solid #b4b4b4;"></div>
<div style="left:566.1px;top:174.4px;width:9px;height:10.5px;background:#e8e8e8;"></div>
<svg style="left:566.1px;top:174.4px" width="9" height="10.5"><path d="M2.0 4.05L4.5 1.5499999999999998L7.0 4.05Z M2.0 6.45L4.5 8.95L7.0 6.45Z" fill="#555"/></svg>
<span style="left:552.30px;top:175.40px;font-size:8.96px;line-height:8.96px;color:#000;transform:scaleX(0.742);transform-origin:0 0;">0.00</span>
<span style="left:586.64px;top:175.17px;font-size:8.96px;line-height:8.96px;color:#222;transform:scaleX(0.734);transform-origin:0 0;">Sixaxis X</span>
<div style="left:620px;top:173.4px;width:26px;height:12.5px;background:#fff;border:1px solid #b4b4b4;"></div>
<div style="left:636px;top:174.4px;width:9px;height:10.5px;background:#e8e8e8;"></div>
<svg style="left:636px;top:174.4px" width="9" height="10.5"><path d="M2.0 4.05L4.5 1.5499999999999998L7.0 4.05Z M2.0 6.45L4.5 8.95L7.0 6.45Z" fill="#555"/></svg>
<span style="left:621.80px;top:175.40px;font-size:8.96px;line-height:8.96px;color:#000;transform:scaleX(0.742);transform-origin:0 0;">0.25</span>
<span style="left:488.25px;top:193.67px;font-size:8.96px;line-height:8.96px;color:#222;transform:scaleX(0.774);transform-origin:0 0;">LS</span>
<div style="left:502.2px;top:192px;width:25.5px;height:12.5px;background:#fff;border:1px solid #b4b4b4;"></div>
<div style="left:517.7px;top:193px;width:9px;height:10.5px;background:#e8e8e8;"></div>
<svg style="left:517.7px;top:193px" width="9" height="10.5"><path d="M2.0 4.05L4.5 1.5499999999999998L7.0 4.05Z M2.0 6.45L4.5 8.95L7.0 6.45Z" fill="#555"/></svg>
<span style="left:504.00px;top:194.00px;font-size:8.96px;line-height:8.96px;color:#000;transform:scaleX(0.742);transform-origin:0 0;">0.30</span>
<span style="left:537.22px;top:193.67px;font-size:8.96px;line-height:8.96px;color:#222;transform:scaleX(0.808);transform-origin:0 0;">RS</span>
<div style="left:550.5px;top:192px;width:25.6px;height:12.5px;background:#fff;border:1px solid #b4b4b4;"></div>
<div style="left:566.1px;top:193px;width:9px;height:10.5px;background:#e8e8e8;"></div>
<svg style="left:566.1px;top:193px" width="9" height="10.5"><path d="M2.0 4.05L4.5 1.5499999999999998L7.0 4.05Z M2.0 6.45L4.5 8.95L7.0 6.45Z" fill="#555"/></svg>
<span style="left:552.30px;top:194.00px;font-size:8.96px;line-height:8.96px;color:#000;transform:scaleX(0.742);transform-origin:0 0;">0.00</span>
<span style="left:586.63px;top:193.67px;font-size:8.96px;line-height:8.96px;color:#222;transform:scaleX(0.747);transform-origin:0 0;">Sixaxis Z</span>
<div style="left:620px;top:192px;width:26px;height:12.5px;background:#fff;border:1px solid #b4b4b4;"></div>
<div style="left:636px;top:193px;width:9px;height:10.5px;background:#e8e8e8;"></div>
<svg style="left:636px;top:193px" width="9" height="10.5"><path d="M2.0 4.05L4.5 1.5499999999999998L7.0 4.05Z M2.0 6.45L4.5 8.95L7.0 6.45Z" fill="#555"/></svg>
<span style="left:621.80px;top:194.00px;font-size:8.96px;line-height:8.96px;color:#000;transform:scaleX(0.742);transform-origin:0 0;">0.25</span>
<div style="left:480.4px;top:216.8px;width:176.2px;height:42.7px;border:1px solid #d5d5d5;"></div>
<div style="left:483.5px;top:212.8px;width:34.4px;height:8px;background:#f5f5f5;"></div>
<span style="left:485.23px;top:212.87px;font-size:8.96px;line-height:8.96px;color:#000;transform:scaleX(0.761);transform-origin:0 0;">Sensitivity</span>
<span style="left:488.18px;top:225.47px;font-size:8.96px;line-height:8.96px;color:#222;transform:scaleX(0.868);transform-origin:0 0;">L2</span>
<div style="left:502.2px;top:223.7px;width:25.5px;height:12.5px;background:#fff;border:1px solid #b4b4b4;"></div>
<div style="left:517.7px;top:224.7px;width:9px;height:10.5px;background:#e8e8e8;"></div>
<svg style="left:517.7px;top:224.7px" width="9" height="10.5"><path d="M2.0 4.05L4.5 1.5499999999999998L7.0 4.05Z M2.0 6.45L4.5 8.95L7.0 6.45Z" fill="#555"/></svg>
<span style="left:503.72px;top:225.70px;font-size:8.96px;line-height:8.96px;color:#000;transform:scaleX(0.758);transform-origin:0 0;">1.00</span>
<span style="left:537.16px;top:225.47px;font-size:8.96px;line-height:8.96px;color:#222;transform:scaleX(0.893);transform-origin:0 0;">R2</span>
<div style="left:550.5px;top:223.7px;width:25.6px;height:12.5px;background:#fff;border:1px solid #b4b4b4;"></div>
<div style="left:566.1px;top:224.7px;width:9px;height:10.5px;background:#e8e8e8;"></div>
<svg style="left:566.1px;top:224.7px" width="9" height="10.5"><path d="M2.0 4.05L4.5 1.5499999999999998L7.0 4.05Z M2.0 6.45L4.5 8.95L7.0 6.45Z" fill="#555"/></svg>
<span style="left:552.02px;top:225.70px;font-size:8.96px;line-height:8.96px;color:#000;transform:scaleX(0.758);transform-origin:0 0;">1.00</span>
<span style="left:586.64px;top:225.47px;font-size:8.96px;line-height:8.96px;color:#222;transform:scaleX(0.734);transform-origin:0 0;">Sixaxis X</span>
<div style="left:620px;top:223.7px;width:26px;height:12.5px;background:#fff;border:1px solid #b4b4b4;"></div>
<div style="left:636px;top:224.7px;width:9px;height:10.5px;background:#e8e8e8;"></div>
<svg style="left:636px;top:224.7px" width="9" height="10.5"><path d="M2.0 4.05L4.5 1.5499999999999998L7.0 4.05Z M2.0 6.45L4.5 8.95L7.0 6.45Z" fill="#555"/></svg>
<span style="left:621.52px;top:225.70px;font-size:8.96px;line-height:8.96px;color:#000;transform:scaleX(0.758);transform-origin:0 0;">1.00</span>
<span style="left:488.25px;top:244.87px;font-size:8.96px;line-height:8.96px;color:#222;transform:scaleX(0.774);transform-origin:0 0;">LS</span>
<div style="left:502.2px;top:243.1px;width:25.5px;height:12.5px;background:#fff;border:1px solid #b4b4b4;"></div>
<div style="left:517.7px;top:244.1px;width:9px;height:10.5px;background:#e8e8e8;"></div>
<svg style="left:517.7px;top:244.1px" width="9" height="10.5"><path d="M2.0 4.05L4.5 1.5499999999999998L7.0 4.05Z M2.0 6.45L4.5 8.95L7.0 6.45Z" fill="#555"/></svg>
<span style="left:503.72px;top:245.10px;font-size:8.96px;line-height:8.96px;color:#000;transform:scaleX(0.758);transform-origin:0 0;">1.50</span>
<span style="left:537.22px;top:244.87px;font-size:8.96px;line-height:8.96px;color:#222;transform:scaleX(0.808);transform-origin:0 0;">RS</span>
<div style="left:550.5px;top:243.1px;width:25.6px;height:12.5px;background:#fff;border:1px solid #b4b4b4;"></div>
<div style="left:566.1px;top:244.1px;width:9px;height:10.5px;background:#e8e8e8;"></div>
<svg style="left:566.1px;top:244.1px" width="9" height="10.5"><path d="M2.0 4.05L4.5 1.5499999999999998L7.0 4.05Z M2.0 6.45L4.5 8.95L7.0 6.45Z" fill="#555"/></svg>
<span style="left:552.02px;top:245.10px;font-size:8.96px;line-height:8.96px;color:#000;transform:scaleX(0.758);transform-origin:0 0;">1.00</span>
<span style="left:586.63px;top:244.87px;font-size:8.96px;line-height:8.96px;color:#222;transform:scaleX(0.747);transform-origin:0 0;">Sixaxis Z</span>
<div style="left:620px;top:243.1px;width:26px;height:12.5px;background:#fff;border:1px solid #b4b4b4;"></div>
<div style="left:636px;top:244.1px;width:9px;height:10.5px;background:#e8e8e8;"></div>
<svg style="left:636px;top:244.1px" width="9" height="10.5"><path d="M2.0 4.05L4.5 1.5499999999999998L7.0 4.05Z M2.0 6.45L4.5 8.95L7.0 6.45Z" fill="#555"/></svg>
<span style="left:621.52px;top:245.10px;font-size:8.96px;line-height:8.96px;color:#000;transform:scaleX(0.758);transform-origin:0 0;">1.00</span>
<div style="left:480.4px;top:269.5px;width:176.3px;height:114px;border:1px solid #d5d5d5;"></div>
<div style="left:483.5px;top:265.5px;width:21.1px;height:8px;background:#f5f5f5;"></div>
<span style="left:485.22px;top:265.87px;font-size:8.96px;line-height:8.96px;color:#000;transform:scaleX(0.779);transform-origin:0 0;">Other</span>
<div style="left:586.2px;top:271.3px;width:8.7px;height:8.7px;background:#fff;border:1px solid #5a5a5a;"></div>
<svg style="left:586.2px;top:271.3px" width="8.7" height="8.7" viewBox="0 0 9 9"><path d="M1.8 4.6L3.6 6.5L7.3 2.3" fill="none" stroke="#3a3a3a" stroke-width="0.95"/></svg>
<span style="left:598.42px;top:271.47px;font-size:8.96px;line-height:8.96px;color:#222;transform:scaleX(0.806);transform-origin:0 0;clip-path:inset(0 0 0 0);">Mouse Acceleration</span>
<div style="left:656.7px;top:268px;width:14px;height:20px;background:#f5f5f5"></div>
<span style="left:484.95px;top:275.87px;font-size:8.96px;line-height:8.96px;color:#222;transform:scaleX(0.764);transform-origin:0 0;">Mouse Sensitivity:</span>
<div style="left:551px;top:275.8px;width:31.2px;height:12.8px;background:#fff;border:1px solid #b4b4b4;"></div>
<div style="left:571.2px;top:276.8px;width:10px;height:10.8px;background:#e8e8e8;"></div>
<svg style="left:571.2px;top:276.8px" width="10" height="10.8"><path d="M2.5 4.2L5.0 1.7000000000000002L7.5 4.2Z M2.5 6.6000000000000005L5.0 9.100000000000001L7.5 6.6000000000000005Z" fill="#555"/></svg>
<span style="left:552.64px;top:277.95px;font-size:8.96px;line-height:8.96px;color:#000;transform:scaleX(0.813);transform-origin:0 0;">25</span>
<span style="left:486.36px;top:294.87px;font-size:8.96px;line-height:8.96px;color:#222;transform:scaleX(0.790);transform-origin:0 0;">Idle Disconnect</span>
<div style="left:540.3px;top:295.4px;width:8.6px;height:8.6px;background:#fff;border:1px solid #5a5a5a;"></div>
<svg style="left:540.3px;top:295.4px" width="8.6" height="8.6" viewBox="0 0 9 9"><path d="M1.8 4.6L3.6 6.5L7.3 2.3" fill="none" stroke="#3a3a3a" stroke-width="0.95"/></svg>
<div style="left:554.3px;top:294px;width:31.1px;height:12.5px;background:#fff;border:1px solid #b4b4b4;"></div>
<div style="left:574.4px;top:295px;width:10px;height:10.5px;background:#e8e8e8;"></div>
<svg style="left:574.4px;top:295px" width="10" height="10.5"><path d="M2.5 4.05L5.0 1.5499999999999998L7.5 4.05Z M2.5 6.45L5.0 8.95L7.5 6.45Z" fill="#555"/></svg>
<span style="left:556.03px;top:296.00px;font-size:8.96px;line-height:8.96px;color:#000;transform:scaleX(0.767);transform-origin:0 0;">5.0</span>
<span style="left:590.10px;top:295.37px;font-size:8.96px;line-height:8.96px;color:#222;transform:scaleX(0.751);transform-origin:0 0;">mins</span>
<span style="left:486.53px;top:313.57px;font-size:8.96px;line-height:8.96px;color:#222;transform:scaleX(0.746);transform-origin:0 0;">Use Controller</span>
<div style="left:536.2px;top:313px;width:19.1px;height:13.2px;background:#fff;border:1px solid #b4b4b4;"></div>
<div style="left:545.3000000000001px;top:314px;width:9px;height:11.2px;background:#e8e8e8;"></div>
<svg style="left:545.3000000000001px;top:314px" width="9" height="11.2"><path d="M2.0 4.3999999999999995L4.5 1.8999999999999995L7.0 4.3999999999999995Z M2.0 6.8L4.5 9.3L7.0 6.8Z" fill="#555"/></svg>
<span style="left:537.80px;top:315.35px;font-size:8.96px;line-height:8.96px;color:#000;transform:scaleX(0.634);transform-origin:0 0;">1</span>
<span style="left:559.63px;top:313.57px;font-size:8.96px;line-height:8.96px;color:#222;transform:scaleX(0.774);transform-origin:0 0;">for Mapping and readout</span>
<div style="left:640.9px;top:314px;width:8.8px;height:8.8px;background:#fff;border:1px solid #5a5a5a;"></div>
<svg style="left:640.9px;top:314px" width="8.8" height="8.8" viewBox="0 0 9 9"><path d="M1.8 4.6L3.6 6.5L7.3 2.3" fill="none" stroke="#3a3a3a" stroke-width="0.95"/></svg>
<span style="left:488.15px;top:333.67px;font-size:8.96px;line-height:8.96px;color:#222;transform:scaleX(0.773);transform-origin:0 0;">Launch Program</span>
<span style="left:506.00px;top:341.77px;font-size:8.96px;line-height:8.96px;color:#222;transform:scaleX(0.773);transform-origin:0 0;">with profile</span>
<div style="left:544.3px;top:338.8px;width:8.6px;height:8.6px;background:#fff;border:1px solid #5a5a5a;"></div>
<div style="left:565px;top:336.2px;width:42.1px;height:13.5px;background:#e1e1e1;border:1px solid #c0c0c0;"></div>
<span style="left:571.49px;top:338.70px;font-size:8.96px;line-height:8.96px;color:#000;transform:scaleX(0.781);transform-origin:0 0;">Browse...</span>
<span style="left:486.52px;top:355.17px;font-size:8.96px;line-height:8.96px;color:#222;transform:scaleX(0.763);transform-origin:0 0;">Use Dinput only</span>
<div style="left:540.3px;top:355.7px;width:8.6px;height:8.6px;background:#fff;border:1px solid #5a5a5a;"></div>
<span style="left:486.44px;top:369.87px;font-size:8.96px;line-height:8.96px;color:#222;transform:scaleX(0.780);transform-origin:0 0;">Flush HID</span>
<div style="left:522.2px;top:371px;width:8.6px;height:8.6px;background:#fff;border:1px solid #5a5a5a;"></div>
<svg style="left:522.2px;top:371px" width="8.6" height="8.6" viewBox="0 0 9 9"><path d="M1.8 4.6L3.6 6.5L7.3 2.3" fill="none" stroke="#3a3a3a" stroke-width="0.95"/></svg>
<div style="left:4px;top:433.5px;width:668px;height:3.5px;background:#fff"></div>
<div style="left:4px;top:437px;width:668px;height:21px;background:#f0f0f0"></div>
<span style="left:7.65px;top:445.31px;font-size:7.84px;line-height:7.84px;color:#6a6a6a;transform:scaleX(0.872);transform-origin:0 0;">Hover over items to see description or more about</span>
<span style="left:576.42px;top:444.84px;font-size:8.40px;line-height:8.40px;color:#1a33c8;transform:scaleX(0.861);transform-origin:0 0;text-decoration:underline;">Hotkeys/About</span>
<div style="left:631.4px;top:442.3px;width:36.1px;height:13px;background:#e1e1e1;border:1px solid #c0c0c0;"></div>
<span style="left:642.95px;top:444.55px;font-size:8.96px;line-height:8.96px;color:#000;transform:scaleX(0.705);transform-origin:0 0;">Stop</span>
<div style="left:675px;top:6px;width:523px;height:502px;background:#f0f0f0;border:1px solid rgba(50,50,50,.7);"></div>
<div style="left:676px;top:7px;width:521px;height:19px;background:#fff"></div>
<svg style="left:679.5px;top:10px" width="13" height="11" viewBox="0 0 35 28"><defs><linearGradient id="gp2" x1="0" y1="0" x2="1" y2="1"><stop offset="0" stop-color="#dfe8f0"/><stop offset=".5" stop-color="#a0b0c0"/><stop offset="1" stop-color="#5a6878"/></linearGradient></defs><g transform="rotate(14 17 13)"><path d="M7 5C11 2 23 2 27 5C31 8 33.5 19 32 23.5C30.5 26.5 27.5 25.5 25.5 21.5L22.5 17.5H11.5L8.5 21.5C6.5 25.5 3.5 26.5 2 23.5C0.5 19 3 8 7 5Z" fill="url(#gp2)" stroke="#3e4a56" stroke-width="2.2"/><path d="M11 4.5Q17 3 23 4.5L22 8H12Z" fill="#7ab4e0"/></g></svg>
<span style="left:693.62px;top:11.10px;font-size:9.52px;line-height:9.52px;color:#9a9a9a;transform:scaleX(0.791);transform-origin:0 0;">Jocys.com X360 Controller Emulator 4.17.15.0 (Build: 2020-11-15)</span>
<div style="left:1120px;top:15.5px;width:7px;height:1px;background:#999"></div>
<div style="left:1149px;top:12.3px;width:7px;height:7px;border:1px solid #999"></div>
<svg style="left:1179px;top:12.3px" width="7" height="7"><path d="M0 0L7 7M7 0L0 7" stroke="#8a8a8a" stroke-width="0.9"/></svg>
<div style="left:676px;top:26px;width:521px;height:41.5px;background:#fbf9e0"></div>
<span style="left:679.23px;top:32.09px;font-size:9.30px;line-height:9.30px;color:#111;font-weight:bold;transform:scaleX(0.837);transform-origin:0 0;">Help Subject</span>
<svg style="left:679px;top:46px" width="16" height="13" viewBox="0 0 16 13"><ellipse cx="8" cy="5.5" rx="7.5" ry="5" fill="#e8f0fa" stroke="#8aa8c8" stroke-width="0.8"/><path d="M5 9.5L4 12.5L8 10" fill="#e8f0fa" stroke="#8aa8c8" stroke-width="0.6"/><rect x="7.2" y="4.2" width="1.6" height="4" fill="#2a4aa0"/><circle cx="8" cy="2.8" r="0.9" fill="#2a4aa0"/></svg>
<span style="left:702.52px;top:45.67px;font-size:8.96px;line-height:8.96px;color:#222;transform:scaleX(0.766);transform-origin:0 0;">Useful Tip: Minimize X360CE Application during gameplay to reduce its load on CPU and GPU. Minimized application automatically turns off CPU</span>
<span style="left:702.59px;top:53.67px;font-size:8.96px;line-height:8.96px;color:#222;transform:scaleX(0.769);transform-origin:0 0;">heavy tasks like Interface updates or state requests from XInput.</span>
<svg style="left:1161px;top:34px" width="35" height="28" viewBox="0 0 35 28"><defs><linearGradient id="gp" x1="0" y1="0" x2="1" y2="1"><stop offset="0" stop-color="#e8eef4"/><stop offset=".5" stop-color="#b4c0cc"/><stop offset="1" stop-color="#6a7888"/></linearGradient></defs><g transform="rotate(14 17 13)"><path d="M7 5C11 2 23 2 27 5C31 8 33.5 19 32 23.5C30.5 26.5 27.5 25.5 25.5 21.5L22.5 17.5H11.5L8.5 21.5C6.5 25.5 3.5 26.5 2 23.5C0.5 19 3 8 7 5Z" fill="url(#gp)" stroke="#3e4a56" stroke-width="1.1"/><path d="M11 4.5Q17 3 23 4.5L22 8H12Z" fill="#7ab4e0"/><circle cx="9.5" cy="10" r="2.2" fill="#f0f4f8" stroke="#5a6878" stroke-width=".6"/><circle cx="25" cy="9" r="1.3" fill="#6a88d0"/><circle cx="27.5" cy="11.5" r="1.3" fill="#6a88d0"/><circle cx="13" cy="15" r="2.3" fill="#8a98a8" stroke="#4a5868" stroke-width=".5"/><circle cx="21.5" cy="15" r="2.3" fill="#8a98a8" stroke="#4a5868" stroke-width=".5"/></g></svg>
<span style="left:679.35px;top:72.07px;font-size:8.96px;line-height:8.96px;color:#222;transform:scaleX(0.780);transform-origin:0 0;">Game:</span>
<div style="left:703.3px;top:69.7px;width:344.2px;height:13.6px;background:#fff"></div>
<div style="left:1047.5px;top:69.7px;width:6.5px;height:13.6px;background:#f4f4f4"></div>
<svg style="left:1048px;top:75px" width="6" height="4"><path d="M0.5 0.5h5L3 3.5z" fill="#111"/></svg>
<span style="left:705.93px;top:72.07px;font-size:8.96px;line-height:8.96px;color:#111;transform:scaleX(0.759);transform-origin:0 0;">x360ce.exe - X360 Controller Emulator</span>
<svg style="left:1096.3px;top:72.5px" width="9" height="9" viewBox="0 0 9 9"><path d="M3.3 0h2.4v3.3H9v2.4H5.7V9H3.3V5.7H0V3.3h3.3z" fill="#3aa83a"/></svg>
<span style="left:1108.00px;top:72.57px;font-size:8.96px;line-height:8.96px;color:#222;transform:scaleX(0.773);transform-origin:0 0;">Add Game...</span>
<svg style="left:1153px;top:72.5px" width="10" height="10" viewBox="0 0 10 10"><path d="M0 0h8.5L10 1.5V10H0z" fill="#2a5ab0"/><rect x="2" y="0" width="5.5" height="3.5" fill="#fff"/><rect x="2" y="6" width="6" height="4" fill="#d8e4f4"/></svg>
<span style="left:1164.72px;top:72.57px;font-size:8.96px;line-height:8.96px;color:#222;transform:scaleX(0.795);transform-origin:0 0;">Save All</span>
<div style="left:676px;top:100.8px;width:521px;height:1px;background:#dadada"></div>
<div style="left:678.7px;top:86.7px;width:57.09999999999991px;height:15px;background:#fff;border:1px solid #dadada;border-bottom:none;"></div>
<div style="left:735.8px;top:89px;width:56.90000000000009px;height:12px;background:#f0f0f0;border:1px solid #dadada;"></div>
<div style="left:791.7px;top:89px;width:56.299999999999955px;height:12px;background:#f0f0f0;border:1px solid #dadada;"></div>
<div style="left:847px;top:89px;width:58.299999999999955px;height:12px;background:#f0f0f0;border:1px solid #dadada;"></div>
<div style="left:904.3px;top:89px;width:32.200000000000045px;height:12px;background:#f0f0f0;border:1px solid #dadada;"></div>
<div style="left:935.5px;top:89px;width:30.5px;height:12px;background:#f0f0f0;border:1px solid #dadada;"></div>
<div style="left:965px;top:89px;width:34px;height:12px;background:#f0f0f0;border:1px solid #dadada;"></div>
<div style="left:998px;top:89px;width:28px;height:12px;background:#f0f0f0;border:1px solid #dadada;"></div>
<div style="left:1025px;top:89px;width:28.5px;height:12px;background:#f0f0f0;border:1px solid #dadada;"></div>
<div style="left:1052.5px;top:89px;width:28.200000000000045px;height:12px;background:#f0f0f0;border:1px solid #dadada;"></div>
<div style="left:1079.7px;top:89px;width:41.0px;height:12px;background:#f0f0f0;border:1px solid #dadada;"></div>
<div style="left:684px;top:90px;width:7.5px;height:6.7px;background:#e04848;border:1px solid #902020;"></div>
<div style="left:685px;top:93px;width:5.5px;height:0.8px;background:#901818"></div>
<span style="left:696.36px;top:89.57px;font-size:8.96px;line-height:8.96px;color:#111;transform:scaleX(0.748);transform-origin:0 0;">Controller 1</span>
<div style="left:740.8px;top:91.5px;width:7.5px;height:6.7px;background:#7a8a8a;border:1px solid #3a4a4a;"></div>
<div style="left:741.8px;top:94.5px;width:5.5px;height:0.8px;background:#2a3a3a"></div>
<span style="left:753.16px;top:91.37px;font-size:8.96px;line-height:8.96px;color:#111;transform:scaleX(0.759);transform-origin:0 0;">Controller 2</span>
<div style="left:796.5px;top:91.5px;width:7.5px;height:6.7px;background:#7a8a8a;border:1px solid #3a4a4a;"></div>
<div style="left:797.5px;top:94.5px;width:5.5px;height:0.8px;background:#2a3a3a"></div>
<span style="left:809.16px;top:91.37px;font-size:8.96px;line-height:8.96px;color:#111;transform:scaleX(0.758);transform-origin:0 0;">Controller 3</span>
<div style="left:852px;top:91.5px;width:7.5px;height:6.7px;background:#7a8a8a;border:1px solid #3a4a4a;"></div>
<div style="left:853px;top:94.5px;width:5.5px;height:0.8px;background:#2a3a3a"></div>
<span style="left:865.66px;top:91.37px;font-size:8.96px;line-height:8.96px;color:#111;transform:scaleX(0.756);transform-origin:0 0;">Controller 4</span>
<span style="left:907.72px;top:91.37px;font-size:8.96px;line-height:8.96px;color:#111;transform:scaleX(0.776);transform-origin:0 0;">Options</span>
<span style="left:939.17px;top:91.37px;font-size:8.96px;line-height:8.96px;color:#111;transform:scaleX(0.746);transform-origin:0 0;">Games</span>
<span style="left:968.39px;top:91.37px;font-size:8.96px;line-height:8.96px;color:#111;transform:scaleX(0.857);transform-origin:0 0;">Devices</span>
<span style="left:1001.14px;top:91.37px;font-size:8.96px;line-height:8.96px;color:#111;transform:scaleX(0.800);transform-origin:0 0;">Cloud</span>
<span style="left:1028.90px;top:91.37px;font-size:8.96px;line-height:8.96px;color:#111;transform:scaleX(0.834);transform-origin:0 0;">Help</span>
<span style="left:1056.00px;top:91.37px;font-size:8.96px;line-height:8.96px;color:#111;transform:scaleX(0.809);transform-origin:0 0;">About</span>
<span style="left:1098.38px;top:91.37px;font-size:8.96px;line-height:8.96px;color:#111;transform:scaleX(0.766);transform-origin:0 0;">Issues</span>
<svg style="left:1083.5px;top:89.5px" width="10" height="10" viewBox="0 0 10 10"><circle cx="5" cy="5" r="4.8" fill="#c8dcc0"/><path d="M2.5 5.2L4.3 7L7.6 3.3" fill="none" stroke="#fff" stroke-width="1.3"/></svg>
<div style="left:676px;top:101.8px;width:521px;height:363px;background:#f0f0f0"></div>
<div style="left:687px;top:106.7px;width:8.3px;height:8.3px;background:#fff;border:1px solid #8a8a8a;"></div>
<span style="left:699.14px;top:106.17px;font-size:8.96px;line-height:8.96px;color:#111;transform:scaleX(0.785);transform-origin:0 0;">Enable 1 Mapped Device</span>
<div style="left:787px;top:106.7px;width:8.3px;height:8.3px;background:#fff;border:1px solid #8a8a8a;"></div>
<span style="left:798.65px;top:106.17px;font-size:8.96px;line-height:8.96px;color:#111;transform:scaleX(0.779);transform-origin:0 0;">Get XInput State</span>
<div style="left:1058.3px;top:106.3px;width:8.3px;height:8.3px;background:#fff;border:1px solid #8a8a8a;"></div>
<span style="left:1070.80px;top:105.57px;font-size:8.96px;line-height:8.96px;color:#111;transform:scaleX(0.790);transform-origin:0 0;">Auto Map</span>
<svg style="left:1108px;top:104.2px" width="12" height="12" viewBox="0 0 12 12"><path d="M4.4 0h3.2v4.4H12v3.2H7.6V12H4.4V7.6H0V4.4h4.4z" fill="#4ab83a"/></svg>
<span style="left:1122.00px;top:105.57px;font-size:8.96px;line-height:8.96px;color:#111;transform:scaleX(0.833);transform-origin:0 0;">Add...</span>
<svg style="left:1147.5px;top:104.5px" width="12" height="11" viewBox="0 0 12 11"><path d="M1.2 1L10.8 10M10.8 1L1.2 10" stroke="#e04040" stroke-width="2.6" stroke-linecap="round"/></svg>
<span style="left:1162.25px;top:105.57px;font-size:8.96px;line-height:8.96px;color:#111;transform:scaleX(0.773);transform-origin:0 0;">Remove</span>
<div style="left:680px;top:142px;width:513.5px;height:19.8px;background:#fff"></div>
<div style="left:680.8px;top:118.3px;width:15px;height:9.2px;background:#0078d7"></div>
<span style="left:730.52px;top:118.67px;font-size:8.96px;line-height:8.96px;color:#222;transform:scaleX(0.777);transform-origin:0 0;">Setting ID</span>
<span style="left:771.15px;top:118.67px;font-size:8.96px;line-height:8.96px;color:#222;transform:scaleX(0.774);transform-origin:0 0;">Map %</span>
<span style="left:799.35px;top:118.67px;font-size:8.96px;line-height:8.96px;color:#222;transform:scaleX(0.810);transform-origin:0 0;">Instance ID</span>
<span style="left:843.30px;top:118.67px;font-size:8.96px;line-height:8.96px;color:#222;transform:scaleX(0.789);transform-origin:0 0;">Vendor Name</span>
<span style="left:938.94px;top:118.67px;font-size:8.96px;line-height:8.96px;color:#222;transform:scaleX(0.782);transform-origin:0 0;">Product Name</span>
<div style="left:680px;top:128.8px;width:513.5px;height:13.4px;background:#0078d7"></div>
<div style="left:684px;top:132.5px;width:6.8px;height:5.8px;background:#58c040;border:1px solid #2a6a20;"></div>
<svg style="left:698px;top:133px" width="10" height="5" viewBox="0 0 10 5"><path d="M0 4.5L7 0.5L10 1.5L3 5z" fill="#e8e8f0"/><path d="M0 4.5L3 5L2 3.5z" fill="#222"/></svg>
<div style="left:715.5px;top:131.7px;width:7.8px;height:8.3px;background:#fff;border:1px solid #aaa;"></div>
<svg style="left:715.5px;top:131.7px" width="8" height="8" viewBox="0 0 9 9"><path d="M1.8 4.6L3.6 6.5L7.3 2.3" fill="none" stroke="#111" stroke-width="1.2"/></svg>
<span style="left:729.15px;top:131.57px;font-size:8.96px;line-height:8.96px;color:#fff;transform:scaleX(0.771);transform-origin:0 0;">BADC8BA5</span>
<span style="left:785.81px;top:131.57px;font-size:8.96px;line-height:8.96px;color:#fff;transform:scaleX(0.774);transform-origin:0 0;">10</span>
<span style="left:799.95px;top:131.57px;font-size:8.96px;line-height:8.96px;color:#fff;transform:scaleX(0.790);transform-origin:0 0;">C65EA6A0</span>
<span style="left:842.53px;top:131.57px;font-size:8.96px;line-height:8.96px;color:#fff;transform:scaleX(0.749);transform-origin:0 0;">Sony Computer Entertainment</span>
<span style="left:938.00px;top:131.57px;font-size:8.96px;line-height:8.96px;color:#fff;transform:scaleX(0.755);transform-origin:0 0;">Wireless Controller</span>
<div style="left:683.3px;top:179.2px;width:506px;height:286.6px;background:#f0f0f0;border:1px solid #dadada;"></div>
<div style="left:684.2px;top:167.5px;width:31.0px;height:12px;background:#f0f0f0;border:1px solid #dadada;"></div>
<span style="left:687.36px;top:168.67px;font-size:8.96px;line-height:8.96px;color:#111;transform:scaleX(0.760);transform-origin:0 0;">General</span>
<div style="left:714.2px;top:167.5px;width:32.59999999999991px;height:12px;background:#f0f0f0;border:1px solid #dadada;"></div>
<span style="left:717.11px;top:168.67px;font-size:8.96px;line-height:8.96px;color:#111;transform:scaleX(0.817);transform-origin:0 0;">Buttons</span>
<div style="left:745.8px;top:167.5px;width:28.5px;height:12px;background:#f0f0f0;border:1px solid #dadada;"></div>
<span style="left:748.72px;top:168.67px;font-size:8.96px;line-height:8.96px;color:#111;transform:scaleX(0.806);transform-origin:0 0;">D-Pad</span>
<div style="left:773.3px;top:167.5px;width:33.200000000000045px;height:12px;background:#f0f0f0;border:1px solid #dadada;"></div>
<span style="left:776.66px;top:168.67px;font-size:8.96px;line-height:8.96px;color:#111;transform:scaleX(0.779);transform-origin:0 0;">Triggers</span>
<div style="left:805.5px;top:166.3px;width:43.700000000000045px;height:14px;background:#fff;border:1px solid #dadada;border-bottom:none;"></div>
<span style="left:808.93px;top:166.67px;font-size:8.96px;line-height:8.96px;color:#111;transform:scaleX(0.794);transform-origin:0 0;">Left Thumb</span>
<div style="left:849.2px;top:167.5px;width:47.299999999999955px;height:12px;background:#f0f0f0;border:1px solid #dadada;"></div>
<span style="left:852.15px;top:168.67px;font-size:8.96px;line-height:8.96px;color:#111;transform:scaleX(0.769);transform-origin:0 0;">Right Thumb</span>
<div style="left:895.5px;top:167.5px;width:60.200000000000045px;height:12px;background:#f0f0f0;border:1px solid #dadada;"></div>
<span style="left:898.44px;top:168.67px;font-size:8.96px;line-height:8.96px;color:#111;transform:scaleX(0.779);transform-origin:0 0;">Force Feedback</span>
<div style="left:954.7px;top:167.5px;width:82.39999999999986px;height:12px;background:#f0f0f0;border:1px solid #dadada;"></div>
<span style="left:957.63px;top:168.67px;font-size:8.96px;line-height:8.96px;color:#111;transform:scaleX(0.799);transform-origin:0 0;">Direct Input - C65EA6A0</span>
<div style="left:688.7px;top:188.3px;width:496px;height:120px;border:1px solid #dcdcdc;"></div>
<div style="left:692.3px;top:184.3px;width:59px;height:8px;background:#f0f0f0;"></div>
<span style="left:694.16px;top:184.17px;font-size:8.96px;line-height:8.96px;color:#000;transform:scaleX(0.756);transform-origin:0 0;">X - Horizontal Axis</span>
<span style="left:694.09px;top:196.67px;font-size:8.96px;line-height:8.96px;color:#222;transform:scaleX(0.855);transform-origin:0 0;">DI:</span>
<span style="left:714.78px;top:196.67px;font-size:8.96px;line-height:8.96px;color:#3a9a3a;transform:scaleX(0.814);transform-origin:0 0;">32767</span>
<span style="left:743.16px;top:196.67px;font-size:8.96px;line-height:8.96px;color:#222;transform:scaleX(0.754);transform-origin:0 0;">XI:</span>
<span style="left:778.47px;top:196.67px;font-size:8.96px;line-height:8.96px;color:#2a2ad0;transform:scaleX(0.866);transform-origin:0 0;">0</span>
<svg style="left:692.5px;top:207.2px" width="97" height="97" viewBox="0 0 97 97"><rect x="0.5" y="0.5" width="96" height="96" fill="#fff" stroke="#6a6a6a"/><path d="M48 1V96" stroke="#d8ecd8" stroke-width="1"/><path d="M1 48.5H96" stroke="#e0e0f4" stroke-width="1"/><path d="M1 96L96 1" stroke="#e87a70" stroke-width="1"/><circle cx="48" cy="48.5" r="1.8" fill="#1a1ad0"/></svg>
<span style="left:793.80px;top:207.17px;font-size:8.96px;line-height:8.96px;color:#222;transform:scaleX(0.782);transform-origin:0 0;">Anti-Dead Zone:</span>
<div style="left:799px;top:223.3px;width:137px;height:3px;background:#e2e2e2;border:1px solid #d4d4d4;"></div>
<div style="left:801.5px;top:232.8px;width:132px;height:1.5px;background:repeating-linear-gradient(90deg,#b0b0b0 0,#b0b0b0 1px,transparent 1px,transparent 3px)"></div>
<svg style="left:799px;top:219.3px" width="7" height="12" viewBox="0 0 7 12"><path d="M0 0h7v8.5L3.5 12L0 8.5z" fill="#0078d7"/></svg>
<span style="left:793.26px;top:239.97px;font-size:8.96px;line-height:8.96px;color:#222;transform:scaleX(0.750);transform-origin:0 0;">Dead Zone:</span>
<div style="left:799px;top:256.1px;width:137px;height:3px;background:#e2e2e2;border:1px solid #d4d4d4;"></div>
<div style="left:801.5px;top:265.6px;width:132px;height:1.5px;background:repeating-linear-gradient(90deg,#b0b0b0 0,#b0b0b0 1px,transparent 1px,transparent 3px)"></div>
<svg style="left:799px;top:252.10000000000002px" width="7" height="12" viewBox="0 0 7 12"><path d="M0 0h7v8.5L3.5 12L0 8.5z" fill="#0078d7"/></svg>
<span style="left:793.53px;top:272.77px;font-size:8.96px;line-height:8.96px;color:#222;transform:scaleX(0.766);transform-origin:0 0;">Sensitivity - Make less sensitive in the center:</span>
<div style="left:799px;top:288.9px;width:137px;height:3px;background:#e2e2e2;border:1px solid #d4d4d4;"></div>
<div style="left:801.5px;top:298.4px;width:132px;height:1.5px;background:repeating-linear-gradient(90deg,#b0b0b0 0,#b0b0b0 1px,transparent 1px,transparent 3px)"></div>
<svg style="left:799px;top:284.9px" width="7" height="12" viewBox="0 0 7 12"><path d="M0 0h7v8.5L3.5 12L0 8.5z" fill="#0078d7"/></svg>
<div style="left:945.3px;top:194.5px;width:103.2px;height:12.7px;background:#fafafa"></div>
<span style="left:950.32px;top:196.47px;font-size:8.96px;line-height:8.96px;color:#111;transform:scaleX(0.859);transform-origin:0 0;">Click Here to Apply Preset</span>
<div style="left:945.3px;top:218.10000000000002px;width:27.2px;height:12px;background:#f0f0f0;border:1px solid #9a9a9a;"></div>
<span style="left:958.30px;top:219.77px;font-size:8.96px;line-height:8.96px;color:#222;transform:scaleX(0.740);transform-origin:0 0;">0 %</span>
<div style="left:976.5px;top:218.10000000000002px;width:34.2px;height:12px;background:#fff;border:1px solid #b0b0b0;"></div>
<div style="left:1001px;top:219.10000000000002px;width:9px;height:10px;background:#e8e8e8;"></div>
<svg style="left:1001px;top:219.10000000000002px" width="9" height="10"><path d="M2.0 3.8L4.5 1.2999999999999998L7.0 3.8Z M2.0 6.2L4.5 8.7L7.0 6.2Z" fill="#333"/></svg>
<span style="left:996.29px;top:219.77px;font-size:8.96px;line-height:8.96px;color:#222;transform:scaleX(0.797);transform-origin:0 0;">0</span>
<div style="left:945.3px;top:251.10000000000002px;width:27.2px;height:12px;background:#f0f0f0;border:1px solid #9a9a9a;"></div>
<span style="left:958.30px;top:252.77px;font-size:8.96px;line-height:8.96px;color:#222;transform:scaleX(0.740);transform-origin:0 0;">0 %</span>
<div style="left:976.5px;top:251.10000000000002px;width:34.2px;height:12px;background:#fff;border:1px solid #b0b0b0;"></div>
<div style="left:1001px;top:252.10000000000002px;width:9px;height:10px;background:#e8e8e8;"></div>
<svg style="left:1001px;top:252.10000000000002px" width="9" height="10"><path d="M2.0 3.8L4.5 1.2999999999999998L7.0 3.8Z M2.0 6.2L4.5 8.7L7.0 6.2Z" fill="#333"/></svg>
<span style="left:996.29px;top:252.77px;font-size:8.96px;line-height:8.96px;color:#222;transform:scaleX(0.797);transform-origin:0 0;">0</span>
<div style="left:945.3px;top:284.3px;width:27.2px;height:12px;background:#f0f0f0;border:1px solid #9a9a9a;"></div>
<span style="left:958.30px;top:285.97px;font-size:8.96px;line-height:8.96px;color:#222;transform:scaleX(0.740);transform-origin:0 0;">0 %</span>
<div style="left:976.5px;top:285.8px;width:8.3px;height:8.3px;background:#fff;border:1px solid #444;"></div>
<span style="left:987.46px;top:285.97px;font-size:8.96px;line-height:8.96px;color:#222;transform:scaleX(0.792);transform-origin:0 0;">Invert</span>
<div style="left:688.7px;top:317.3px;width:496px;height:120px;border:1px solid #dcdcdc;"></div>
<div style="left:692.3px;top:313.3px;width:51.2px;height:8px;background:#f0f0f0;"></div>
<span style="left:694.16px;top:313.17px;font-size:8.96px;line-height:8.96px;color:#000;transform:scaleX(0.766);transform-origin:0 0;">Y - Vertical Axis</span>
<span style="left:694.09px;top:325.67px;font-size:8.96px;line-height:8.96px;color:#222;transform:scaleX(0.855);transform-origin:0 0;">DI:</span>
<span style="left:714.78px;top:325.67px;font-size:8.96px;line-height:8.96px;color:#3a9a3a;transform:scaleX(0.803);transform-origin:0 0;">34848</span>
<span style="left:743.16px;top:325.67px;font-size:8.96px;line-height:8.96px;color:#222;transform:scaleX(0.754);transform-origin:0 0;">XI:</span>
<span style="left:764.11px;top:325.67px;font-size:8.96px;line-height:8.96px;color:#2a2ad0;transform:scaleX(0.809);transform-origin:0 0;">-9431</span>
<svg style="left:692.4px;top:336.5px" width="97" height="97" viewBox="0 0 97 97"><rect x="0.5" y="0.5" width="96" height="96" fill="#fff" stroke="#6a6a6a"/><path d="M51.5 1V96" stroke="#d8ecd8" stroke-width="1"/><path d="M1 61H96" stroke="#e0e0f4" stroke-width="1"/><path d="M1 96L96 1" stroke="#ececec" stroke-width="0.6"/><path d="M1 96L49 60.5M49 36.5L96 1" stroke="#e87a70" stroke-width="1"/><circle cx="51.5" cy="46" r="1.8" fill="#1a8a1a"/><circle cx="51.5" cy="62" r="1.8" fill="#1a1ad0"/></svg>
<span style="left:793.80px;top:336.17px;font-size:8.96px;line-height:8.96px;color:#222;transform:scaleX(0.782);transform-origin:0 0;">Anti-Dead Zone:</span>
<div style="left:799px;top:352.3px;width:137px;height:3px;background:#e2e2e2;border:1px solid #d4d4d4;"></div>
<div style="left:801.5px;top:361.8px;width:132px;height:1.5px;background:repeating-linear-gradient(90deg,#b0b0b0 0,#b0b0b0 1px,transparent 1px,transparent 3px)"></div>
<svg style="left:830px;top:348.3px" width="7" height="12" viewBox="0 0 7 12"><path d="M0 0h7v8.5L3.5 12L0 8.5z" fill="#0078d7"/></svg>
<span style="left:793.26px;top:368.97px;font-size:8.96px;line-height:8.96px;color:#222;transform:scaleX(0.750);transform-origin:0 0;">Dead Zone:</span>
<div style="left:799px;top:385.1px;width:137px;height:3px;background:#e2e2e2;border:1px solid #d4d4d4;"></div>
<div style="left:801.5px;top:394.6px;width:132px;height:1.5px;background:repeating-linear-gradient(90deg,#b0b0b0 0,#b0b0b0 1px,transparent 1px,transparent 3px)"></div>
<svg style="left:799.4px;top:381.1px" width="7" height="12" viewBox="0 0 7 12"><path d="M0 0h7v8.5L3.5 12L0 8.5z" fill="#0078d7"/></svg>
<span style="left:793.53px;top:401.77px;font-size:8.96px;line-height:8.96px;color:#222;transform:scaleX(0.766);transform-origin:0 0;">Sensitivity - Make less sensitive in the center:</span>
<div style="left:799px;top:417.9px;width:137px;height:3px;background:#e2e2e2;border:1px solid #d4d4d4;"></div>
<div style="left:801.5px;top:427.4px;width:132px;height:1.5px;background:repeating-linear-gradient(90deg,#b0b0b0 0,#b0b0b0 1px,transparent 1px,transparent 3px)"></div>
<svg style="left:799.4px;top:413.9px" width="7" height="12" viewBox="0 0 7 12"><path d="M0 0h7v8.5L3.5 12L0 8.5z" fill="#0078d7"/></svg>
<div style="left:945.3px;top:323.5px;width:103.2px;height:12.7px;background:#fafafa"></div>
<span style="left:950.32px;top:325.47px;font-size:8.96px;line-height:8.96px;color:#111;transform:scaleX(0.859);transform-origin:0 0;">Click Here to Apply Preset</span>
<div style="left:945.3px;top:347.1px;width:27.2px;height:12px;background:#f0f0f0;border:1px solid #9a9a9a;"></div>
<span style="left:954.16px;top:348.77px;font-size:8.96px;line-height:8.96px;color:#222;transform:scaleX(0.761);transform-origin:0 0;">24 %</span>
<div style="left:976.5px;top:347.1px;width:34.2px;height:12px;background:#fff;border:1px solid #b0b0b0;"></div>
<div style="left:1001px;top:348.1px;width:9px;height:10px;background:#e8e8e8;"></div>
<svg style="left:1001px;top:348.1px" width="9" height="10"><path d="M2.0 3.8L4.5 1.2999999999999998L7.0 3.8Z M2.0 6.2L4.5 8.7L7.0 6.2Z" fill="#333"/></svg>
<span style="left:985.67px;top:348.77px;font-size:8.96px;line-height:8.96px;color:#222;transform:scaleX(0.734);transform-origin:0 0;">7849</span>
<div style="left:945.3px;top:380.1px;width:27.2px;height:12px;background:#f0f0f0;border:1px solid #9a9a9a;"></div>
<span style="left:958.30px;top:381.77px;font-size:8.96px;line-height:8.96px;color:#222;transform:scaleX(0.740);transform-origin:0 0;">0 %</span>
<div style="left:976.5px;top:380.1px;width:34.2px;height:12px;background:#fff;border:1px solid #b0b0b0;"></div>
<div style="left:1001px;top:381.1px;width:9px;height:10px;background:#e8e8e8;"></div>
<svg style="left:1001px;top:381.1px" width="9" height="10"><path d="M2.0 3.8L4.5 1.2999999999999998L7.0 3.8Z M2.0 6.2L4.5 8.7L7.0 6.2Z" fill="#333"/></svg>
<span style="left:996.29px;top:381.77px;font-size:8.96px;line-height:8.96px;color:#222;transform:scaleX(0.797);transform-origin:0 0;">0</span>
<div style="left:945.3px;top:413.3px;width:27.2px;height:12px;background:#f0f0f0;border:1px solid #9a9a9a;"></div>
<span style="left:958.30px;top:414.97px;font-size:8.96px;line-height:8.96px;color:#222;transform:scaleX(0.740);transform-origin:0 0;">0 %</span>
<div style="left:976.5px;top:414.8px;width:8.3px;height:8.3px;background:#fff;border:1px solid #444;"></div>
<span style="left:987.46px;top:414.97px;font-size:8.96px;line-height:8.96px;color:#222;transform:scaleX(0.792);transform-origin:0 0;">Invert</span>
<div style="left:683px;top:470.5px;width:66.39999999999998px;height:13.5px;background:#e1e1e1;border:1px solid #c0c0c0;"></div>
<span style="left:686.86px;top:473.00px;font-size:8.96px;line-height:8.96px;color:#000;transform:scaleX(0.759);transform-origin:0 0;">Game Controllers...</span>
<div style="left:755.5px;top:470.5px;width:49.60000000000002px;height:13.5px;background:#e1e1e1;border:1px solid #c0c0c0;"></div>
<span style="left:761.23px;top:473.00px;font-size:8.96px;line-height:8.96px;color:#000;transform:scaleX(0.794);transform-origin:0 0;">DX Tweak...</span>
<div style="left:832.8px;top:470.5px;width:63.10000000000002px;height:13.5px;background:#e1e1e1;border:1px solid #c0c0c0;"></div>
<span style="left:847.96px;top:473.47px;font-size:8.96px;line-height:8.96px;color:#000;transform:scaleX(0.758);transform-origin:0 0;">Copy Preset</span>
<svg style="left:837.8px;top:473px" width="8" height="9" viewBox="0 0 8 9"><rect x="0.5" y="0.5" width="5" height="7" fill="#fff" stroke="#8ab"/><rect x="2.5" y="1.5" width="5" height="7" fill="#dde8f4" stroke="#7a9ab8"/></svg>
<div style="left:901.2px;top:470.5px;width:63.39999999999998px;height:13.5px;background:#e1e1e1;border:1px solid #c0c0c0;"></div>
<span style="left:916.15px;top:473.47px;font-size:8.96px;line-height:8.96px;color:#000;transform:scaleX(0.770);transform-origin:0 0;">Paste Preset</span>
<svg style="left:906.2px;top:472.5px" width="8" height="10" viewBox="0 0 8 10"><rect x="0" y="1" width="7" height="9" fill="#d88a30"/><rect x="3" y="3" width="5" height="7" fill="#fff" stroke="#aaa" stroke-width=".5"/></svg>
<div style="left:970px;top:470.5px;width:63px;height:13.5px;background:#e1e1e1;border:1px solid #c0c0c0;"></div>
<span style="left:979.43px;top:473.00px;font-size:8.96px;line-height:8.96px;color:#000;transform:scaleX(0.792);transform-origin:0 0;">Load Preset...</span>
<div style="left:1039.1px;top:470.5px;width:46.90000000000009px;height:13.5px;background:#e1e1e1;border:1px solid #c0c0c0;"></div>
<span style="left:1055.30px;top:473.00px;font-size:8.96px;line-height:8.96px;color:#000;transform:scaleX(0.801);transform-origin:0 0;">Auto</span>
<div style="left:1090px;top:470.5px;width:47.700000000000045px;height:13.5px;background:#e1e1e1;border:1px solid #c0c0c0;"></div>
<span style="left:1105.51px;top:473.00px;font-size:8.96px;line-height:8.96px;color:#000;transform:scaleX(0.766);transform-origin:0 0;">Clear</span>
<div style="left:1142.5px;top:470.5px;width:47.700000000000045px;height:13.5px;background:#e1e1e1;border:1px solid #c0c0c0;"></div>
<span style="left:1156.78px;top:473.00px;font-size:8.96px;line-height:8.96px;color:#000;transform:scaleX(0.794);transform-origin:0 0;">Reset</span>
<div style="left:676px;top:488px;width:521px;height:1px;background:#dcdcdc"></div>
<span style="left:677.64px;top:495.37px;font-size:8.96px;line-height:8.96px;color:#111;transform:scaleX(0.796);transform-origin:0 0;">'PadSetting' loaded.</span>
<span style="left:990.42px;top:495.37px;font-size:8.96px;line-height:8.96px;color:#111;transform:scaleX(0.807);transform-origin:0 0;">Hz: 999</span>
<span style="left:1019.01px;top:495.37px;font-size:8.96px;line-height:8.96px;color:#111;transform:scaleX(0.824);transform-origin:0 0;">Hz: 5</span>
<span style="left:1040.02px;top:495.37px;font-size:8.96px;line-height:8.96px;color:#111;transform:scaleX(0.809);transform-origin:0 0;">D: 1</span>
<span style="left:1058.81px;top:495.37px;font-size:8.96px;line-height:8.96px;color:#111;transform:scaleX(0.829);transform-origin:0 0;">M: 0</span>
<span style="left:1079.45px;top:495.37px;font-size:8.96px;line-height:8.96px;color:#111;transform:scaleX(0.774);transform-origin:0 0;">Elevated: False</span>
<div style="left:1056px;top:494px;width:1px;height:12px;background:#c8c8c8"></div>
<div style="left:1076.6px;top:494px;width:1px;height:12px;background:#c8c8c8"></div>
<div style="left:1131.5px;top:494px;width:1px;height:12px;background:#c8c8c8"></div>
<div style="left:1186.6px;top:494px;width:1px;height:12px;background:#c8c8c8"></div>
<svg style="left:1134px;top:495.3px" width="10" height="10" viewBox="0 0 10 10"><circle cx="5" cy="5" r="4.8" fill="#d83a3a"/><path d="M3 3L7 7M7 3L3 7" stroke="#fff" stroke-width="1.4"/></svg>
<span style="left:1145.86px;top:495.37px;font-size:8.96px;line-height:8.96px;color:#b02a2a;transform:scaleX(0.759);transform-origin:0 0;">Errors: 1 | 0</span></body></html>
